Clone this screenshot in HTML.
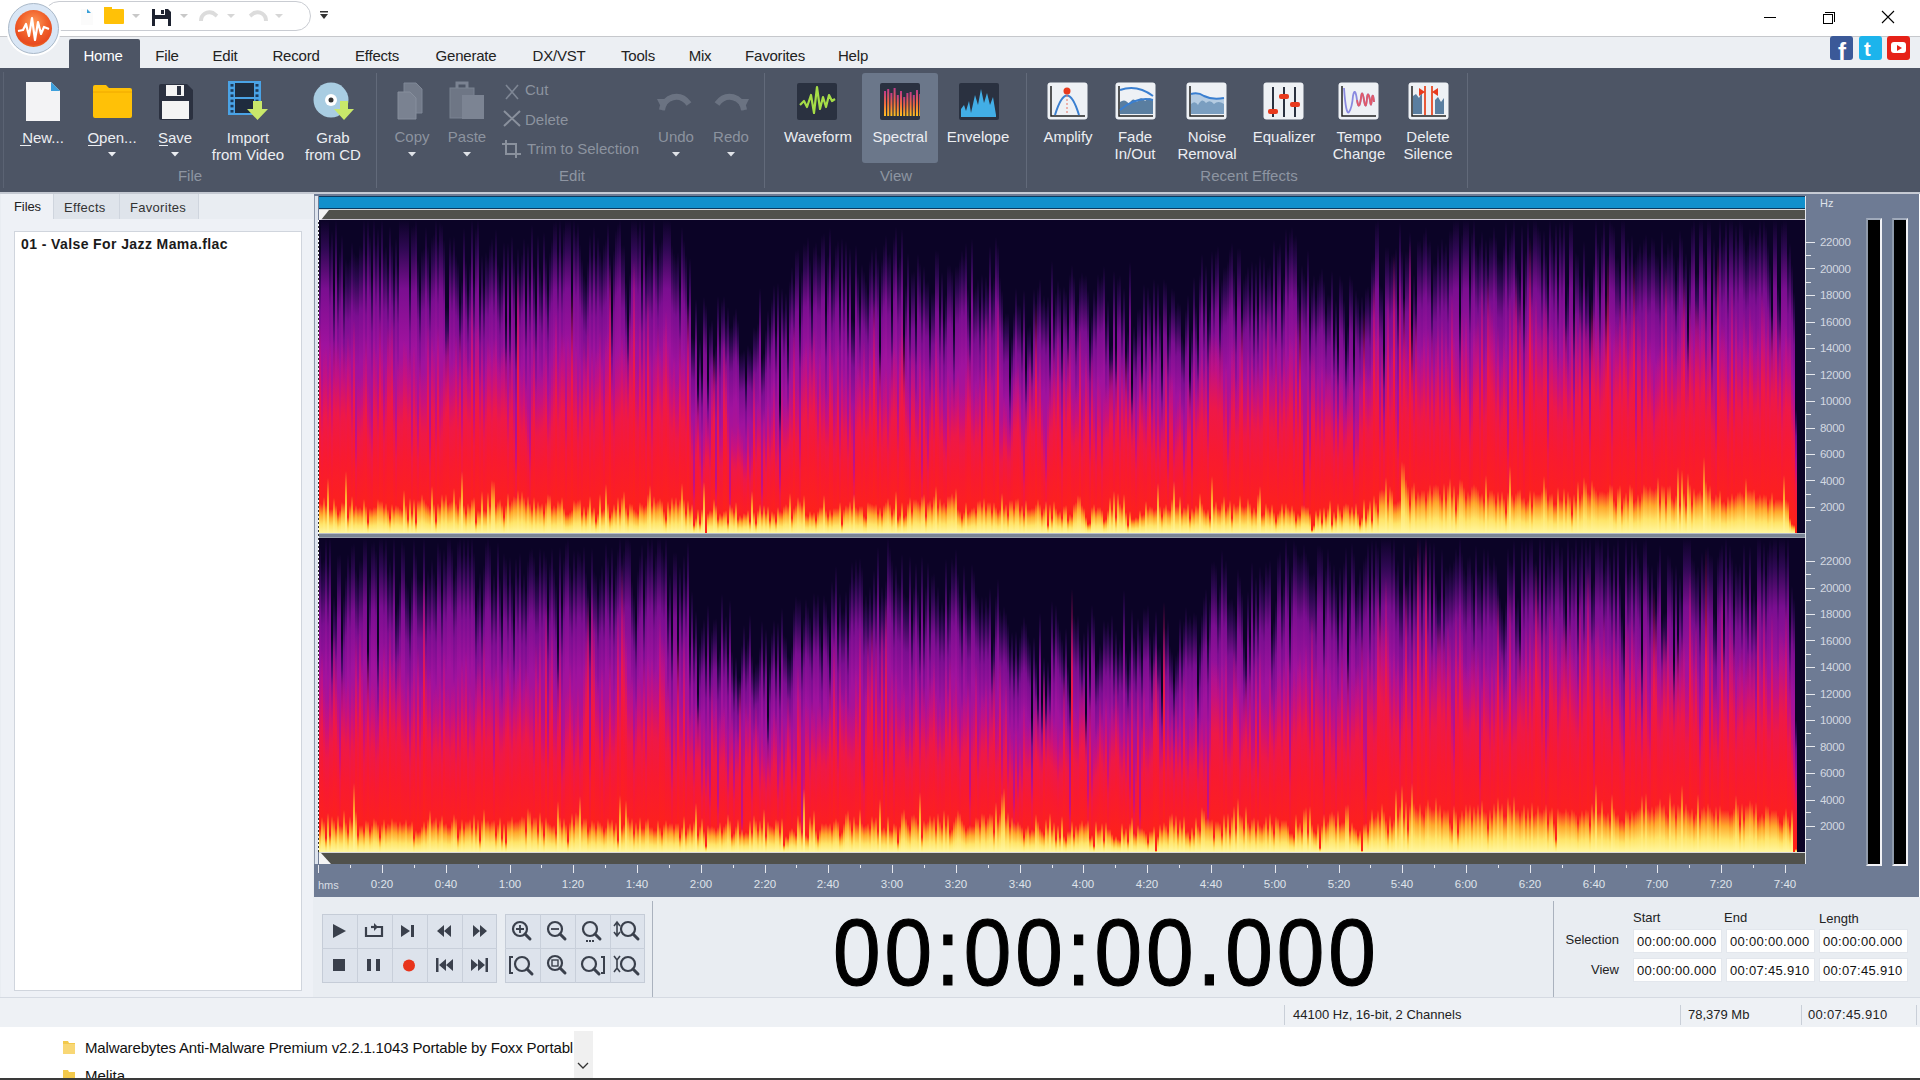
<!DOCTYPE html><html><head><meta charset="utf-8"><title>WavePad</title><style>
*{margin:0;padding:0;box-sizing:border-box}
html,body{width:1920px;height:1080px;overflow:hidden;background:#fff;font-family:"Liberation Sans",sans-serif}
.a{position:absolute;display:block}
.t{position:absolute;white-space:nowrap;font-family:"Liberation Sans",sans-serif}

.spec{position:absolute;left:319px;width:1486px;display:flex;background:#0b0326;overflow:hidden}
.spec i{display:block;width:2px;height:100%;flex:none;background-color:#0b0326;background-repeat:no-repeat;background-position:bottom;
background-image:linear-gradient(to top,#fff7a0,#ffe468 30%,#ffa82c 62%,rgba(255,60,20,0)),linear-gradient(to top,#ff2414,#f81a30 40%,#ee1848 62%,rgba(220,16,110,.55) 82%,rgba(215,20,120,0)),linear-gradient(to top,#cc127a,#b8128e 38%,#a0129e 60%,#7a0e90 78%,rgba(60,10,100,.7) 91%,rgba(11,3,38,0))}
</style></head><body><div class="a" style="left:0px;top:0px;width:1920px;height:36px;background:#fff;"></div><div class="a" style="left:0px;top:36px;width:1920px;height:1px;background:#c6c8cc;"></div><div class="a" style="left:44px;top:1px;width:267px;height:30px;border:1px solid #c9ccd2;border-radius:15px;background:#fff"></div><svg class="a" style="left:80px;top:8px;" width="14" height="18" viewBox="0 0 14 18"><path d="M1 1h8l4 4v12H1z" fill="#fbfbfb"/><path d="M7 1l4 4H7z" fill="#3aa0d8"/></svg><div class="a" style="left:104px;top:9px;width:20px;height:15px;background:#ffc107;border-radius:1px"></div><div class="a" style="left:104px;top:7px;width:8px;height:3px;background:#ffc107;"></div><svg class="a" style="left:131px;top:13px;" width="10" height="6" viewBox="0 0 10 6"><path d="M1 1h8L5 5z" fill="#c8c8c8"/></svg><svg class="a" style="left:151px;top:8px;" width="21" height="19" viewBox="0 0 21 19"><path d="M1 1h16l3 3v14H1z" fill="#1d2230"/><rect x="4" y="1" width="10" height="6" fill="#fff"/><rect x="10" y="2" width="3" height="4" fill="#1d2230"/><rect x="4" y="11" width="13" height="7" fill="#fff"/></svg><svg class="a" style="left:179px;top:13px;" width="10" height="6" viewBox="0 0 10 6"><path d="M1 1h8L5 5z" fill="#c8c8c8"/></svg><svg class="a" style="left:197px;top:9px;" width="24" height="14" viewBox="0 0 24 14"><path d="M4 12 C4 5 10 2 16 4 L20 7" fill="none" stroke="#dcdcdc" stroke-width="4"/></svg><svg class="a" style="left:226px;top:13px;" width="10" height="6" viewBox="0 0 10 6"><path d="M1 1h8L5 5z" fill="#d6d6d6"/></svg><svg class="a" style="left:246px;top:9px;" width="24" height="14" viewBox="0 0 24 14"><path d="M20 12 C20 5 14 2 8 4 L4 7" fill="none" stroke="#dcdcdc" stroke-width="4"/></svg><svg class="a" style="left:274px;top:13px;" width="10" height="6" viewBox="0 0 10 6"><path d="M1 1h8L5 5z" fill="#d6d6d6"/></svg><svg class="a" style="left:319px;top:10px;" width="10" height="12" viewBox="0 0 10 12"><rect x="1" y="1" width="8" height="1.5" fill="#333"/><path d="M1 4h8L5 9z" fill="#333"/></svg><div class="a" style="left:1764px;top:17px;width:12px;height:1px;background:#000;"></div><div class="a" style="left:1823px;top:14px;width:10px;height:10px;border:1px solid #000"></div><div class="a" style="left:1825px;top:12px;width:10px;height:10px;border-top:1px solid #000;border-right:1px solid #000"></div><svg class="a" style="left:1881px;top:10px;" width="14" height="14" viewBox="0 0 14 14"><path d="M1 1L13 13M13 1L1 13" stroke="#000" stroke-width="1.1"/></svg><div class="a" style="left:0px;top:37px;width:1920px;height:31px;background:#eceff3;"></div><div class="a" style="left:69px;top:39px;width:71px;height:29px;background:#4d5565;border-radius:2px 2px 0 0"></div><div class="t" style="top:48.3px;font-size:15px;line-height:15px;color:#fff;letter-spacing:-0.2px;left:-97px;width:400px;text-align:center;">Home</div><div class="t" style="top:48.3px;font-size:15px;line-height:15px;color:#222;letter-spacing:-0.2px;left:-33px;width:400px;text-align:center;">File</div><div class="t" style="top:48.3px;font-size:15px;line-height:15px;color:#222;letter-spacing:-0.2px;left:25px;width:400px;text-align:center;">Edit</div><div class="t" style="top:48.3px;font-size:15px;line-height:15px;color:#222;letter-spacing:-0.2px;left:96px;width:400px;text-align:center;">Record</div><div class="t" style="top:48.3px;font-size:15px;line-height:15px;color:#222;letter-spacing:-0.2px;left:177px;width:400px;text-align:center;">Effects</div><div class="t" style="top:48.3px;font-size:15px;line-height:15px;color:#222;letter-spacing:-0.2px;left:266px;width:400px;text-align:center;">Generate</div><div class="t" style="top:48.3px;font-size:15px;line-height:15px;color:#222;letter-spacing:-0.2px;left:359px;width:400px;text-align:center;">DX/VST</div><div class="t" style="top:48.3px;font-size:15px;line-height:15px;color:#222;letter-spacing:-0.2px;left:438px;width:400px;text-align:center;">Tools</div><div class="t" style="top:48.3px;font-size:15px;line-height:15px;color:#222;letter-spacing:-0.2px;left:500px;width:400px;text-align:center;">Mix</div><div class="t" style="top:48.3px;font-size:15px;line-height:15px;color:#222;letter-spacing:-0.2px;left:575px;width:400px;text-align:center;">Favorites</div><div class="t" style="top:48.3px;font-size:15px;line-height:15px;color:#222;letter-spacing:-0.2px;left:653px;width:400px;text-align:center;">Help</div><div class="a" style="left:8px;top:3px;width:51px;height:51px;border-radius:50%;background:#d9e6f5;border:1px solid #a9b8c8;box-shadow:0 0 0 2px #fff"></div><div class="a" style="left:15px;top:10px;width:37px;height:37px;border-radius:50%;background:radial-gradient(circle at 50% 35%,#ff9a5a 0%,#f0602a 45%,#e84a20 70%,#f7b32a 100%)"></div><svg class="a" style="left:15px;top:10px;" width="37" height="37" viewBox="0 0 37 37"><path d="M3 21 L8 20 L11 14 L14 26 L17 8 L20 30 L23 12 L26 24 L29 17 L34 19" fill="none" stroke="#fff" stroke-width="2.2" stroke-linejoin="round"/></svg><div class="a" style="left:1830px;top:36px;width:23px;height:24px;background:#3b5998;border-radius:3px"></div><div class="t" style="top:39.7px;font-size:24px;line-height:24px;color:#fff;font-weight:700;left:1838px;line-height:24px">f</div><div class="a" style="left:1859px;top:36px;width:23px;height:24px;background:#1cb4ec;border-radius:3px"></div><div class="t" style="top:39.1px;font-size:20px;line-height:20px;color:#fff;font-weight:700;left:1864px;">t</div><div class="a" style="left:1887px;top:36px;width:23px;height:24px;background:#e62117;border-radius:3px"></div><div class="a" style="left:1891px;top:42px;width:15px;height:11px;background:#fff;border-radius:3px"></div><svg class="a" style="left:1895px;top:44px;" width="8" height="8" viewBox="0 0 8 8"><path d="M2 1L7 4L2 7z" fill="#e62117"/></svg><div class="a" style="left:0px;top:68px;width:1920px;height:124px;background:#4d5565;"></div><div class="a" style="left:3px;top:72px;width:1px;height:116px;background:#5b6373;"></div><div class="a" style="left:376px;top:73px;width:1px;height:115px;background:#626a7a;"></div><div class="a" style="left:764px;top:73px;width:1px;height:115px;background:#626a7a;"></div><div class="a" style="left:1026px;top:73px;width:1px;height:115px;background:#626a7a;"></div><div class="a" style="left:1467px;top:73px;width:1px;height:115px;background:#626a7a;"></div><svg class="a" style="left:26px;top:82px;" width="34" height="39" viewBox="0 0 34 39"><path d="M0 0h25l9 9v30H0z" fill="#f3f3f5"/><path d="M25 0l9 9h-9z" fill="#3d9fdc"/></svg><div class="t" style="top:130.3px;font-size:15px;line-height:15px;color:#eceef2;left:-157px;width:400px;text-align:center;">New...</div><div class="a" style="left:20px;top:145px;width:11px;height:1px;background:#eceef2;"></div><svg class="a" style="left:92px;top:84px;" width="41" height="35" viewBox="0 0 41 35"><path d="M1 3 Q1 1 3 1 H14 L17 4 H38 Q40 4 40 6 V32 Q40 34 38 34 H3 Q1 34 1 32z" fill="#ffc107"/><path d="M1 8 H40" stroke="#f0a800" stroke-width="1"/></svg><div class="t" style="top:130.3px;font-size:15px;line-height:15px;color:#eceef2;left:-88px;width:400px;text-align:center;">Open...</div><div class="a" style="left:88px;top:145px;width:13px;height:1px;background:#eceef2;"></div><svg class="a" style="left:159px;top:84px;" width="34" height="36" viewBox="0 0 34 36"><path d="M0 2 Q0 0 2 0 H28 L34 6 V34 Q34 36 32 36 H2 Q0 36 0 34z" fill="#2b3140"/><rect x="7" y="1" width="18" height="11" fill="#f4f4f4"/><rect x="18" y="2" width="4" height="9" fill="#2b3140"/><rect x="3" y="17" width="27" height="18" fill="#f4f4f4"/></svg><div class="t" style="top:130.3px;font-size:15px;line-height:15px;color:#eceef2;left:-25px;width:400px;text-align:center;">Save</div><div class="a" style="left:159px;top:145px;width:9px;height:1px;background:#eceef2;"></div><svg class="a" style="left:228px;top:81px;" width="41" height="40" viewBox="0 0 41 40"><rect x="0" y="0" width="33" height="34" fill="#4aa3e6"/><rect x="7" y="2" width="19" height="14" fill="#1f2c3e"/><rect x="7" y="18" width="19" height="14" fill="#1f2c3e"/><rect x="2.5" y="3.0" width="3" height="2.6" fill="#1d3a5a"/><rect x="27.5" y="3.0" width="3" height="2.6" fill="#1d3a5a"/><rect x="2.5" y="8.2" width="3" height="2.6" fill="#1d3a5a"/><rect x="27.5" y="8.2" width="3" height="2.6" fill="#1d3a5a"/><rect x="2.5" y="13.4" width="3" height="2.6" fill="#1d3a5a"/><rect x="27.5" y="13.4" width="3" height="2.6" fill="#1d3a5a"/><rect x="2.5" y="18.6" width="3" height="2.6" fill="#1d3a5a"/><rect x="27.5" y="18.6" width="3" height="2.6" fill="#1d3a5a"/><rect x="2.5" y="23.8" width="3" height="2.6" fill="#1d3a5a"/><rect x="27.5" y="23.8" width="3" height="2.6" fill="#1d3a5a"/><rect x="2.5" y="29.0" width="3" height="2.6" fill="#1d3a5a"/><rect x="27.5" y="29.0" width="3" height="2.6" fill="#1d3a5a"/><path d="M25 20h9v8h6l-10.5 11L19 28h6z" fill="#c9e86a"/></svg><div class="t" style="top:130.3px;font-size:15px;line-height:15px;color:#eceef2;left:48px;width:400px;text-align:center;">Import</div><div class="t" style="top:147.3px;font-size:15px;line-height:15px;color:#eceef2;left:48px;width:400px;text-align:center;">from Video</div><svg class="a" style="left:313px;top:81px;" width="41" height="40" viewBox="0 0 41 40"><circle cx="18" cy="19" r="17.5" fill="#a9cde2"/><circle cx="18" cy="19" r="6" fill="#fff"/><circle cx="18" cy="19" r="2.5" fill="#333"/><path d="M27 20h8v8h6l-10 11L21 28h6z" fill="#c9e86a"/></svg><div class="t" style="top:130.3px;font-size:15px;line-height:15px;color:#eceef2;left:133px;width:400px;text-align:center;">Grab</div><div class="t" style="top:147.3px;font-size:15px;line-height:15px;color:#eceef2;left:133px;width:400px;text-align:center;">from CD</div><svg class="a" style="left:108px;top:152px;" width="8" height="5" viewBox="0 0 8 5"><path d="M0 0h8L4 4.5z" fill="#eceef2"/></svg><svg class="a" style="left:171px;top:152px;" width="8" height="5" viewBox="0 0 8 5"><path d="M0 0h8L4 4.5z" fill="#eceef2"/></svg><div class="t" style="top:168.3px;font-size:15px;line-height:15px;color:#8e95a2;left:-10px;width:400px;text-align:center;">File</div><svg class="a" style="left:396px;top:82px;" width="32" height="38" viewBox="0 0 32 38"><path d="M8 1h12l6 6v24H8z" fill="#737b8a" stroke="#7f8796"/><path d="M2 10h12l6 6v21H2z" fill="#7a8291" stroke="#868e9c"/></svg><div class="t" style="top:129.3px;font-size:15px;line-height:15px;color:#8c939f;left:212px;width:400px;text-align:center;">Copy</div><svg class="a" style="left:448px;top:81px;" width="38" height="39" viewBox="0 0 38 39"><rect x="2" y="7" width="24" height="30" fill="#6e7685" stroke="#7b8392"/><path d="M9 7V2h10v5" fill="none" stroke="#7b8392" stroke-width="3"/><rect x="14" y="14" width="22" height="24" fill="#7c8493"/></svg><div class="t" style="top:129.3px;font-size:15px;line-height:15px;color:#8c939f;left:267px;width:400px;text-align:center;">Paste</div><svg class="a" style="left:408px;top:152px;" width="8" height="5" viewBox="0 0 8 5"><path d="M0 0h8L4 4.5z" fill="#e0e3e8"/></svg><svg class="a" style="left:463px;top:152px;" width="8" height="5" viewBox="0 0 8 5"><path d="M0 0h8L4 4.5z" fill="#e0e3e8"/></svg><svg class="a" style="left:503px;top:84px;" width="18" height="16" viewBox="0 0 18 16"><path d="M3 1L15 15M15 1L3 15" stroke="#7e8694" stroke-width="1.6"/></svg><div class="t" style="top:82.3px;font-size:15px;line-height:15px;color:#8c939f;left:525px;">Cut</div><svg class="a" style="left:502px;top:109px;" width="20" height="19" viewBox="0 0 20 19"><path d="M2 2L18 17M18 2L2 17" stroke="#8a919d" stroke-width="2"/></svg><div class="t" style="top:112.3px;font-size:15px;line-height:15px;color:#8c939f;left:525px;">Delete</div><svg class="a" style="left:501px;top:139px;" width="21" height="20" viewBox="0 0 21 20"><path d="M5 1V15H20M1 5H15V19" fill="none" stroke="#8a919d" stroke-width="2"/></svg><div class="t" style="top:141.3px;font-size:15px;line-height:15px;color:#8c939f;left:527px;">Trim to Selection</div><svg class="a" style="left:656px;top:90px;" width="38" height="24" viewBox="0 0 38 24"><path d="M6 20 C8 6 24 2 33 14" fill="none" stroke="#6b7382" stroke-width="6"/><path d="M1 9 L14 9 L7 21z" fill="#6b7382"/></svg><div class="t" style="top:129.3px;font-size:15px;line-height:15px;color:#8c939f;left:476px;width:400px;text-align:center;">Undo</div><svg class="a" style="left:712px;top:90px;" width="38" height="24" viewBox="0 0 38 24"><path d="M32 20 C30 6 14 2 5 14" fill="none" stroke="#6b7382" stroke-width="6"/><path d="M37 9 L24 9 L31 21z" fill="#6b7382"/></svg><div class="t" style="top:129.3px;font-size:15px;line-height:15px;color:#8c939f;left:531px;width:400px;text-align:center;">Redo</div><svg class="a" style="left:672px;top:152px;" width="8" height="5" viewBox="0 0 8 5"><path d="M0 0h8L4 4.5z" fill="#e0e3e8"/></svg><svg class="a" style="left:727px;top:152px;" width="8" height="5" viewBox="0 0 8 5"><path d="M0 0h8L4 4.5z" fill="#e0e3e8"/></svg><div class="t" style="top:168.3px;font-size:15px;line-height:15px;color:#8e95a2;left:372px;width:400px;text-align:center;">Edit</div><div class="a" style="left:862px;top:73px;width:76px;height:90px;background:#6b778a;border-radius:3px"></div><svg class="a" style="left:797px;top:83px;" width="40" height="37" viewBox="0 0 40 37"><rect width="40" height="37" rx="2" fill="#2a3140"/><path d="M3 22 L7 18 L10 24 L14 12 L17 30 L20 4 L23 26 L26 14 L29 24 L32 12 L35 18 L38 16" fill="none" stroke="#a6dd47" stroke-width="2.2" stroke-linejoin="round"/></svg><div class="t" style="top:129.3px;font-size:15px;line-height:15px;color:#eceef2;left:618px;width:400px;text-align:center;">Waveform</div><svg class="a" style="left:880px;top:83px;" width="40" height="37" viewBox="0 0 40 37"><defs><linearGradient id="sg" x1="0" y1="0" x2="0" y2="1"><stop offset="0" stop-color="#c03a8a"/><stop offset=".5" stop-color="#f06a40"/><stop offset="1" stop-color="#ffc020"/></linearGradient></defs><rect width="40" height="37" rx="2" fill="#2a3140"/><rect x="4.0" y="8" width="2" height="25" fill="url(#sg)"/><rect x="7.2" y="6" width="2" height="27" fill="url(#sg)"/><rect x="10.4" y="10" width="2" height="23" fill="url(#sg)"/><rect x="13.6" y="5" width="2" height="28" fill="url(#sg)"/><rect x="16.8" y="12" width="2" height="21" fill="url(#sg)"/><rect x="20.0" y="8" width="2" height="25" fill="url(#sg)"/><rect x="23.2" y="14" width="2" height="19" fill="url(#sg)"/><rect x="26.4" y="10" width="2" height="23" fill="url(#sg)"/><rect x="29.6" y="9" width="2" height="24" fill="url(#sg)"/><rect x="32.8" y="12" width="2" height="21" fill="url(#sg)"/><rect x="36.0" y="7" width="2" height="26" fill="url(#sg)"/><rect x="39.2" y="11" width="2" height="22" fill="url(#sg)"/></svg><div class="t" style="top:129.3px;font-size:15px;line-height:15px;color:#eceef2;left:700px;width:400px;text-align:center;">Spectral</div><svg class="a" style="left:959px;top:83px;" width="40" height="37" viewBox="0 0 40 37"><rect width="40" height="37" rx="2" fill="#2a3140"/><path d="M2 34 L2 26 L5 22 L7 28 L10 18 L12 30 L16 12 L19 22 L22 6 L25 20 L28 10 L31 22 L34 14 L37 32 L37 34z" fill="#42aee6"/></svg><div class="t" style="top:129.3px;font-size:15px;line-height:15px;color:#eceef2;left:778px;width:400px;text-align:center;">Envelope</div><div class="t" style="top:168.3px;font-size:15px;line-height:15px;color:#8e95a2;left:696px;width:400px;text-align:center;">View</div><svg class="a" style="left:1047px;top:82px;" width="41" height="38" viewBox="0 0 41 38"><rect x="0.5" y="0.5" width="40" height="37" rx="3" fill="#eef1f5"/><path d="M4 4V34H38" fill="none" stroke="#222" stroke-width="1.5"/><path d="M8 33 Q20 -6 32 33" fill="none" stroke="#3a7fd0" stroke-width="2"/><circle cx="20" cy="9" r="3.5" fill="#e83a1e"/><path d="M20 13V32" stroke="#e87060" stroke-dasharray="2 2"/></svg><div class="t" style="top:129.3px;font-size:15px;line-height:15px;color:#eceef2;left:868px;width:400px;text-align:center;">Amplify</div><svg class="a" style="left:1115px;top:82px;" width="41" height="38" viewBox="0 0 41 38"><rect x="0.5" y="0.5" width="40" height="37" rx="3" fill="#eef1f5"/><path d="M4 4V34H38" fill="none" stroke="#222" stroke-width="1.5"/><path d="M5 32 V20 Q10 16 14 22 Q18 14 22 20 Q26 13 30 19 Q34 14 38 18 V32z" fill="#5a7ea0"/><path d="M5 8 Q22 2 38 14" fill="none" stroke="#3a7fd0" stroke-width="2"/><path d="M5 28 Q22 14 38 18" fill="none" stroke="#3a7fd0" stroke-width="2"/></svg><div class="t" style="top:129.3px;font-size:15px;line-height:15px;color:#eceef2;left:935px;width:400px;text-align:center;">Fade</div><div class="t" style="top:146.3px;font-size:15px;line-height:15px;color:#eceef2;left:935px;width:400px;text-align:center;">In/Out</div><svg class="a" style="left:1186px;top:82px;" width="41" height="38" viewBox="0 0 41 38"><rect x="0.5" y="0.5" width="40" height="37" rx="3" fill="#eef1f5"/><path d="M4 4V34H38" fill="none" stroke="#222" stroke-width="1.5"/><path d="M5 32 V22 Q9 18 12 23 Q16 15 20 21 Q24 17 28 22 Q32 18 38 22 V32z" fill="#5a7ea0"/><path d="M5 12 Q12 10 18 14 Q26 18 38 16 V32 H5z" fill="#8fb4d6" opacity=".6"/><path d="M5 12 Q12 10 18 14 Q26 18 38 16" fill="none" stroke="#3a7fd0" stroke-width="2"/></svg><div class="t" style="top:129.3px;font-size:15px;line-height:15px;color:#eceef2;left:1007px;width:400px;text-align:center;">Noise</div><div class="t" style="top:146.3px;font-size:15px;line-height:15px;color:#eceef2;left:1007px;width:400px;text-align:center;">Removal</div><svg class="a" style="left:1263px;top:82px;" width="41" height="38" viewBox="0 0 41 38"><rect x="0.5" y="0.5" width="40" height="37" rx="3" fill="#eef1f5"/><path d="M10 5V35M21 5V35M32 5V35" stroke="#2a3140" stroke-width="2"/><rect x="5" y="27" width="10" height="5" rx="2" fill="#e83a1e"/><rect x="16" y="12" width="10" height="5" rx="2" fill="#e83a1e"/><rect x="27" y="20" width="10" height="5" rx="2" fill="#e83a1e"/></svg><div class="t" style="top:129.3px;font-size:15px;line-height:15px;color:#eceef2;left:1084px;width:400px;text-align:center;">Equalizer</div><svg class="a" style="left:1338px;top:82px;" width="41" height="38" viewBox="0 0 41 38"><rect x="0.5" y="0.5" width="40" height="37" rx="3" fill="#eef1f5"/><path d="M4 4V34H38" fill="none" stroke="#222" stroke-width="1.5"/><path d="M6 6 Q8 34 11 30 Q14 26 15 14 Q17 4 19 18 Q21 30 23 16 Q24 6 26 18 Q28 30 29 16 Q30 8 32 18 Q33 28 34 16 Q35 10 36 20" fill="none" stroke="#8a8ae0" stroke-width="1.8"/><path d="M19 18 Q21 30 23 16 Q24 6 26 18 Q28 30 29 16 Q30 8 32 18 Q33 28 34 16 Q35 10 36 20" fill="none" stroke="#e05a6a" stroke-width="1.8"/></svg><div class="t" style="top:129.3px;font-size:15px;line-height:15px;color:#eceef2;left:1159px;width:400px;text-align:center;">Tempo</div><div class="t" style="top:146.3px;font-size:15px;line-height:15px;color:#eceef2;left:1159px;width:400px;text-align:center;">Change</div><svg class="a" style="left:1408px;top:82px;" width="41" height="38" viewBox="0 0 41 38"><rect x="0.5" y="0.5" width="40" height="37" rx="3" fill="#eef1f5"/><path d="M4 4V34H38" fill="none" stroke="#222" stroke-width="1.5"/><path d="M5 32V14 L8 12 L11 16 L14 10 V32z" fill="#5a7ea0"/><path d="M27 32V18 L30 15 L33 20 L36 16 V32z" fill="#5a7ea0"/><path d="M17 4V33M24 4V33" stroke="#e85a3a" stroke-width="2"/><path d="M11 6L17 10L11 14z" fill="#e83a1e"/><path d="M30 6L24 10L30 14z" fill="#e83a1e"/></svg><div class="t" style="top:129.3px;font-size:15px;line-height:15px;color:#eceef2;left:1228px;width:400px;text-align:center;">Delete</div><div class="t" style="top:146.3px;font-size:15px;line-height:15px;color:#eceef2;left:1228px;width:400px;text-align:center;">Silence</div><div class="t" style="top:168.3px;font-size:15px;line-height:15px;color:#8e95a2;left:1049px;width:400px;text-align:center;">Recent Effects</div><div class="a" style="left:0px;top:192px;width:1920px;height:2px;background:#c4c9d2;"></div><div class="a" style="left:0px;top:194px;width:314px;height:803px;background:#e9edf2;"></div><div class="a" style="left:1px;top:194px;width:52px;height:26px;background:#eef1f6;"></div><div class="a" style="left:53px;top:194px;width:67px;height:25px;background:#dfe4eb;border-right:1px solid #cfd5de;border-left:1px solid #cfd5de"></div><div class="a" style="left:120px;top:194px;width:79px;height:25px;background:#dfe4eb;border-right:1px solid #cfd5de"></div><div class="t" style="top:200.0px;font-size:13px;line-height:13px;color:#222;letter-spacing:-0.1px;left:14px;">Files</div><div class="t" style="top:201.0px;font-size:13px;line-height:13px;color:#333;letter-spacing:0.3px;left:64px;">Effects</div><div class="t" style="top:201.0px;font-size:13px;line-height:13px;color:#333;letter-spacing:0.3px;left:130px;">Favorites</div><div class="a" style="left:1px;top:219px;width:312px;height:778px;background:#eef1f6;"></div><div class="a" style="left:14px;top:231px;width:288px;height:760px;background:#fff;border:1px solid #d0d5dd"></div><div class="t" style="top:237.1px;font-size:14px;line-height:14px;color:#1a1a1a;font-weight:700;letter-spacing:0.4px;left:21px;">01 - Valse For Jazz Mama.flac</div><div class="a" style="left:314px;top:193px;width:1605px;height:704px;background:#6e7b94;border-top:1px solid #c8ccd6"></div><div class="a" style="left:319px;top:196px;width:1486px;height:13px;background:#1290cc;border-top:1px solid #0a3a60;border-bottom:1px solid #0a3a60"></div><div class="a" style="left:319px;top:209px;width:1486px;height:11px;background:#50514c;border-top:1px solid #d8d8d8;border-bottom:1px solid #c8c4d0"></div><svg class="a" style="left:319px;top:210px;" width="20" height="10" viewBox="0 0 20 10"><path d="M0 0H10L2 10H0z" fill="#f4f4f4"/></svg><div class="spec c1" style="top:220px;height:313px"><i style="background-size:100% 30px,100% 211px,100% 284px"></i><i style="background-size:100% 29px,100% 157px,100% 313px"></i><i style="background-size:100% 36px,100% 185px,100% 313px"></i><i style="background-size:100% 28px,100% 188px,100% 313px"></i><i style="background-size:100% 55px,100% 168px,100% 313px"></i><i style="background-size:100% 24px,100% 193px,100% 290px"></i><i style="background-size:100% 24px,100% 154px,100% 302px"></i><i style="background-size:100% 35px,100% 195px,100% 243px"></i><i style="background-size:100% 28px,100% 187px,100% 313px"></i><i style="background-size:100% 19px,100% 193px,100% 260px"></i><i style="background-size:100% 23px,100% 176px,100% 282px"></i><i style="background-size:100% 31px,100% 191px,100% 298px"></i><i style="background-size:100% 30px,100% 190px,100% 247px"></i><i style="background-size:100% 62px,100% 181px,100% 274px"></i><i style="background-size:100% 16px,100% 200px,100% 271px"></i><i style="background-size:100% 28px,100% 189px,100% 274px"></i><i style="background-size:100% 37px,100% 154px,100% 291px"></i><i style="background-size:100% 24px,100% 214px,100% 281px"></i><i style="background-size:100% 28px,100% 104px,100% 278px"></i><i style="background-size:100% 25px,100% 155px,100% 277px"></i><i style="background-size:100% 26px,100% 154px,100% 288px"></i><i style="background-size:100% 24px,100% 159px,100% 286px"></i><i style="background-size:100% 34px,100% 181px,100% 313px"></i><i style="background-size:100% 27px,100% 197px,100% 279px"></i><i style="background-size:100% 11px,100% 151px,100% 313px"></i><i style="background-size:100% 25px,100% 139px,100% 298px"></i><i style="background-size:100% 24px,100% 122px,100% 257px"></i><i style="background-size:100% 26px,100% 194px,100% 313px"></i><i style="background-size:100% 26px,100% 183px,100% 289px"></i><i style="background-size:100% 34px,100% 155px,100% 305px"></i><i style="background-size:100% 32px,100% 215px,100% 268px"></i><i style="background-size:100% 32px,100% 189px,100% 313px"></i><i style="background-size:100% 26px,100% 144px,100% 282px"></i><i style="background-size:100% 30px,100% 171px,100% 287px"></i><i style="background-size:100% 24px,100% 208px,100% 269px"></i><i style="background-size:100% 15px,100% 204px,100% 307px"></i><i style="background-size:100% 29px,100% 215px,100% 289px"></i><i style="background-size:100% 24px,100% 158px,100% 260px"></i><i style="background-size:100% 28px,100% 120px,100% 295px"></i><i style="background-size:100% 27px,100% 174px,100% 268px"></i><i style="background-size:100% 25px,100% 175px,100% 313px"></i><i style="background-size:100% 23px,100% 174px,100% 313px"></i><i style="background-size:100% 43px,100% 193px,100% 313px"></i><i style="background-size:100% 28px,100% 190px,100% 313px"></i><i style="background-size:100% 14px,100% 176px,100% 313px"></i><i style="background-size:100% 35px,100% 185px,100% 256px"></i><i style="background-size:100% 20px,100% 120px,100% 307px"></i><i style="background-size:100% 34px,100% 187px,100% 308px"></i><i style="background-size:100% 11px,100% 161px,100% 313px"></i><i style="background-size:100% 33px,100% 120px,100% 273px"></i><i style="background-size:100% 33px,100% 176px,100% 243px"></i><i style="background-size:100% 39px,100% 160px,100% 283px"></i><i style="background-size:100% 34px,100% 161px,100% 285px"></i><i style="background-size:100% 30px,100% 159px,100% 306px"></i><i style="background-size:100% 28px,100% 209px,100% 287px"></i><i style="background-size:100% 25px,100% 108px,100% 257px"></i><i style="background-size:100% 47px,100% 197px,100% 296px"></i><i style="background-size:100% 29px,100% 184px,100% 299px"></i><i style="background-size:100% 12px,100% 135px,100% 313px"></i><i style="background-size:100% 30px,100% 207px,100% 293px"></i><i style="background-size:100% 27px,100% 148px,100% 311px"></i><i style="background-size:100% 39px,100% 157px,100% 309px"></i><i style="background-size:100% 33px,100% 180px,100% 293px"></i><i style="background-size:100% 39px,100% 193px,100% 226px"></i><i style="background-size:100% 29px,100% 203px,100% 226px"></i><i style="background-size:100% 31px,100% 168px,100% 296px"></i><i style="background-size:100% 32px,100% 170px,100% 283px"></i><i style="background-size:100% 45px,100% 175px,100% 297px"></i><i style="background-size:100% 30px,100% 198px,100% 278px"></i><i style="background-size:100% 25px,100% 165px,100% 271px"></i><i style="background-size:100% 37px,100% 204px,100% 230px"></i><i style="background-size:100% 62px,100% 135px,100% 253px"></i><i style="background-size:100% 28px,100% 189px,100% 305px"></i><i style="background-size:100% 20px,100% 193px,100% 272px"></i><i style="background-size:100% 30px,100% 175px,100% 243px"></i><i style="background-size:100% 27px,100% 173px,100% 270px"></i><i style="background-size:100% 34px,100% 236px,100% 313px"></i><i style="background-size:100% 36px,100% 141px,100% 255px"></i><i style="background-size:100% 11px,100% 208px,100% 305px"></i><i style="background-size:100% 23px,100% 211px,100% 313px"></i><i style="background-size:100% 22px,100% 164px,100% 241px"></i><i style="background-size:100% 42px,100% 193px,100% 278px"></i><i style="background-size:100% 23px,100% 148px,100% 248px"></i><i style="background-size:100% 22px,100% 174px,100% 281px"></i><i style="background-size:100% 41px,100% 196px,100% 276px"></i><i style="background-size:100% 27px,100% 190px,100% 289px"></i><i style="background-size:100% 53px,100% 178px,100% 295px"></i><i style="background-size:100% 52px,100% 194px,100% 278px"></i><i style="background-size:100% 27px,100% 197px,100% 304px"></i><i style="background-size:100% 32px,100% 177px,100% 269px"></i><i style="background-size:100% 34px,100% 178px,100% 253px"></i><i style="background-size:100% 28px,100% 187px,100% 267px"></i><i style="background-size:100% 16px,100% 188px,100% 291px"></i><i style="background-size:100% 28px,100% 186px,100% 212px"></i><i style="background-size:100% 40px,100% 142px,100% 290px"></i><i style="background-size:100% 29px,100% 183px,100% 215px"></i><i style="background-size:100% 33px,100% 188px,100% 297px"></i><i style="background-size:100% 37px,100% 149px,100% 274px"></i><i style="background-size:100% 36px,100% 91px,100% 209px"></i><i style="background-size:100% 43px,100% 261px,100% 285px"></i><i style="background-size:100% 35px,100% 166px,100% 264px"></i><i style="background-size:100% 42px,100% 159px,100% 279px"></i><i style="background-size:100% 36px,100% 169px,100% 295px"></i><i style="background-size:100% 29px,100% 151px,100% 234px"></i><i style="background-size:100% 37px,100% 125px,100% 290px"></i><i style="background-size:100% 30px,100% 96px,100% 255px"></i><i style="background-size:100% 24px,100% 171px,100% 308px"></i><i style="background-size:100% 36px,100% 199px,100% 267px"></i><i style="background-size:100% 26px,100% 156px,100% 231px"></i><i style="background-size:100% 32px,100% 156px,100% 298px"></i><i style="background-size:100% 28px,100% 160px,100% 265px"></i><i style="background-size:100% 30px,100% 163px,100% 253px"></i><i style="background-size:100% 20px,100% 172px,100% 301px"></i><i style="background-size:100% 31px,100% 186px,100% 276px"></i><i style="background-size:100% 39px,100% 140px,100% 244px"></i><i style="background-size:100% 38px,100% 149px,100% 281px"></i><i style="background-size:100% 25px,100% 170px,100% 294px"></i><i style="background-size:100% 28px,100% 188px,100% 311px"></i><i style="background-size:100% 26px,100% 221px,100% 312px"></i><i style="background-size:100% 33px,100% 170px,100% 282px"></i><i style="background-size:100% 31px,100% 187px,100% 313px"></i><i style="background-size:100% 36px,100% 202px,100% 281px"></i><i style="background-size:100% 25px,100% 196px,100% 306px"></i><i style="background-size:100% 19px,100% 135px,100% 313px"></i><i style="background-size:100% 19px,100% 198px,100% 313px"></i><i style="background-size:100% 21px,100% 187px,100% 313px"></i><i style="background-size:100% 23px,100% 244px,100% 227px"></i><i style="background-size:100% 33px,100% 176px,100% 313px"></i><i style="background-size:100% 31px,100% 188px,100% 301px"></i><i style="background-size:100% 33px,100% 144px,100% 310px"></i><i style="background-size:100% 34px,100% 178px,100% 289px"></i><i style="background-size:100% 19px,100% 149px,100% 274px"></i><i style="background-size:100% 27px,100% 193px,100% 258px"></i><i style="background-size:100% 19px,100% 180px,100% 252px"></i><i style="background-size:100% 27px,100% 206px,100% 272px"></i><i style="background-size:100% 37px,100% 155px,100% 298px"></i><i style="background-size:100% 22px,100% 186px,100% 278px"></i><i style="background-size:100% 26px,100% 160px,100% 306px"></i><i style="background-size:100% 12px,100% 183px,100% 276px"></i><i style="background-size:100% 20px,100% 185px,100% 296px"></i><i style="background-size:100% 39px,100% 203px,100% 283px"></i><i style="background-size:100% 22px,100% 176px,100% 275px"></i><i style="background-size:100% 24px,100% 140px,100% 289px"></i><i style="background-size:100% 49px,100% 198px,100% 294px"></i><i style="background-size:100% 30px,100% 201px,100% 310px"></i><i style="background-size:100% 16px,100% 269px,100% 278px"></i><i style="background-size:100% 22px,100% 171px,100% 224px"></i><i style="background-size:100% 29px,100% 150px,100% 283px"></i><i style="background-size:100% 24px,100% 179px,100% 303px"></i><i style="background-size:100% 36px,100% 182px,100% 309px"></i><i style="background-size:100% 22px,100% 187px,100% 313px"></i><i style="background-size:100% 36px,100% 201px,100% 288px"></i><i style="background-size:100% 42px,100% 185px,100% 288px"></i><i style="background-size:100% 26px,100% 198px,100% 251px"></i><i style="background-size:100% 19px,100% 181px,100% 214px"></i><i style="background-size:100% 30px,100% 221px,100% 260px"></i><i style="background-size:100% 29px,100% 209px,100% 313px"></i><i style="background-size:100% 24px,100% 272px,100% 313px"></i><i style="background-size:100% 22px,100% 172px,100% 313px"></i><i style="background-size:100% 20px,100% 162px,100% 304px"></i><i style="background-size:100% 31px,100% 216px,100% 313px"></i><i style="background-size:100% 29px,100% 177px,100% 256px"></i><i style="background-size:100% 26px,100% 211px,100% 313px"></i><i style="background-size:100% 28px,100% 139px,100% 269px"></i><i style="background-size:100% 39px,100% 240px,100% 280px"></i><i style="background-size:100% 48px,100% 181px,100% 282px"></i><i style="background-size:100% 28px,100% 132px,100% 273px"></i><i style="background-size:100% 37px,100% 179px,100% 313px"></i><i style="background-size:100% 31px,100% 188px,100% 292px"></i><i style="background-size:100% 33px,100% 209px,100% 274px"></i><i style="background-size:100% 35px,100% 187px,100% 290px"></i><i style="background-size:100% 32px,100% 175px,100% 295px"></i><i style="background-size:100% 22px,100% 207px,100% 313px"></i><i style="background-size:100% 14px,100% 222px,100% 313px"></i><i style="background-size:100% 32px,100% 192px,100% 313px"></i><i style="background-size:100% 25px,100% 167px,100% 312px"></i><i style="background-size:100% 36px,100% 161px,100% 288px"></i><i style="background-size:100% 30px,100% 177px,100% 280px"></i><i style="background-size:100% 36px,100% 153px,100% 276px"></i><i style="background-size:100% 29px,100% 150px,100% 281px"></i><i style="background-size:100% 34px,100% 200px,100% 247px"></i><i style="background-size:100% 50px,100% 177px,100% 306px"></i><i style="background-size:100% 34px,100% 183px,100% 293px"></i><i style="background-size:100% 20px,100% 160px,100% 278px"></i><i style="background-size:100% 33px,100% 229px,100% 233px"></i><i style="background-size:100% 24px,100% 144px,100% 275px"></i><i style="background-size:100% 29px,100% 114px,100% 197px"></i><i style="background-size:100% 8px,100% 51px,100% 195px"></i><i style="background-size:100% 15px,100% 122px,100% 234px"></i><i style="background-size:100% 24px,100% 139px,100% 149px"></i><i style="background-size:100% 10px,100% 104px,100% 194px"></i><i style="background-size:100% 24px,100% 71px,100% 161px"></i><i style="background-size:100% 51px,100% 102px,100% 236px"></i><i style="background-size:100% 0px,100% 119px,100% 228px"></i><i style="background-size:100% 20px,100% 119px,100% 154px"></i><i style="background-size:100% 23px,100% 100px,100% 208px"></i><i style="background-size:100% 22px,100% 163px,100% 213px"></i><i style="background-size:100% 34px,100% 181px,100% 178px"></i><i style="background-size:100% 28px,100% 55px,100% 188px"></i><i style="background-size:100% 14px,100% 168px,100% 237px"></i><i style="background-size:100% 20px,100% 107px,100% 198px"></i><i style="background-size:100% 18px,100% 108px,100% 233px"></i><i style="background-size:100% 22px,100% 194px,100% 237px"></i><i style="background-size:100% 23px,100% 177px,100% 214px"></i><i style="background-size:100% 11px,100% 125px,100% 226px"></i><i style="background-size:100% 29px,100% 43px,100% 206px"></i><i style="background-size:100% 26px,100% 107px,100% 207px"></i><i style="background-size:100% 21px,100% 102px,100% 219px"></i><i style="background-size:100% 31px,100% 100px,100% 225px"></i><i style="background-size:100% 14px,100% 111px,100% 213px"></i><i style="background-size:100% 18px,100% 106px,100% 180px"></i><i style="background-size:100% 16px,100% 100px,100% 181px"></i><i style="background-size:100% 20px,100% 85px,100% 183px"></i><i style="background-size:100% 19px,100% 84px,100% 155px"></i><i style="background-size:100% 23px,100% 112px,100% 188px"></i><i style="background-size:100% 12px,100% 80px,100% 185px"></i><i style="background-size:100% 42px,100% 92px,100% 180px"></i><i style="background-size:100% 21px,100% 164px,100% 206px"></i><i style="background-size:100% 10px,100% 111px,100% 204px"></i><i style="background-size:100% 23px,100% 132px,100% 210px"></i><i style="background-size:100% 29px,100% 127px,100% 245px"></i><i style="background-size:100% 20px,100% 50px,100% 175px"></i><i style="background-size:100% 28px,100% 123px,100% 180px"></i><i style="background-size:100% 20px,100% 96px,100% 204px"></i><i style="background-size:100% 27px,100% 132px,100% 223px"></i><i style="background-size:100% 13px,100% 113px,100% 209px"></i><i style="background-size:100% 22px,100% 127px,100% 234px"></i><i style="background-size:100% 20px,100% 151px,100% 248px"></i><i style="background-size:100% 12px,100% 103px,100% 203px"></i><i style="background-size:100% 26px,100% 115px,100% 250px"></i><i style="background-size:100% 22px,100% 61px,100% 130px"></i><i style="background-size:100% 21px,100% 149px,100% 245px"></i><i style="background-size:100% 27px,100% 129px,100% 224px"></i><i style="background-size:100% 29px,100% 129px,100% 240px"></i><i style="background-size:100% 27px,100% 136px,100% 188px"></i><i style="background-size:100% 40px,100% 154px,100% 252px"></i><i style="background-size:100% 15px,100% 145px,100% 266px"></i><i style="background-size:100% 25px,100% 208px,100% 250px"></i><i style="background-size:100% 28px,100% 144px,100% 283px"></i><i style="background-size:100% 36px,100% 153px,100% 284px"></i><i style="background-size:100% 32px,100% 102px,100% 211px"></i><i style="background-size:100% 28px,100% 180px,100% 263px"></i><i style="background-size:100% 38px,100% 185px,100% 290px"></i><i style="background-size:100% 18px,100% 194px,100% 289px"></i><i style="background-size:100% 17px,100% 163px,100% 296px"></i><i style="background-size:100% 22px,100% 195px,100% 274px"></i><i style="background-size:100% 19px,100% 189px,100% 232px"></i><i style="background-size:100% 21px,100% 205px,100% 287px"></i><i style="background-size:100% 13px,100% 172px,100% 291px"></i><i style="background-size:100% 22px,100% 138px,100% 279px"></i><i style="background-size:100% 26px,100% 185px,100% 278px"></i><i style="background-size:100% 26px,100% 149px,100% 298px"></i><i style="background-size:100% 38px,100% 161px,100% 300px"></i><i style="background-size:100% 23px,100% 141px,100% 223px"></i><i style="background-size:100% 17px,100% 137px,100% 278px"></i><i style="background-size:100% 24px,100% 196px,100% 305px"></i><i style="background-size:100% 19px,100% 183px,100% 256px"></i><i style="background-size:100% 25px,100% 133px,100% 268px"></i><i style="background-size:100% 25px,100% 146px,100% 288px"></i><i style="background-size:100% 25px,100% 188px,100% 293px"></i><i style="background-size:100% 31px,100% 118px,100% 239px"></i><i style="background-size:100% 9px,100% 166px,100% 295px"></i><i style="background-size:100% 24px,100% 149px,100% 256px"></i><i style="background-size:100% 28px,100% 155px,100% 292px"></i><i style="background-size:100% 27px,100% 120px,100% 224px"></i><i style="background-size:100% 32px,100% 162px,100% 285px"></i><i style="background-size:100% 25px,100% 132px,100% 215px"></i><i style="background-size:100% 39px,100% 72px,100% 212px"></i><i style="background-size:100% 26px,100% 159px,100% 288px"></i><i style="background-size:100% 24px,100% 171px,100% 261px"></i><i style="background-size:100% 27px,100% 179px,100% 230px"></i><i style="background-size:100% 27px,100% 152px,100% 269px"></i><i style="background-size:100% 17px,100% 192px,100% 262px"></i><i style="background-size:100% 15px,100% 148px,100% 252px"></i><i style="background-size:100% 31px,100% 153px,100% 241px"></i><i style="background-size:100% 30px,100% 187px,100% 273px"></i><i style="background-size:100% 29px,100% 169px,100% 284px"></i><i style="background-size:100% 28px,100% 234px,100% 259px"></i><i style="background-size:100% 29px,100% 179px,100% 287px"></i><i style="background-size:100% 20px,100% 131px,100% 274px"></i><i style="background-size:100% 26px,100% 181px,100% 187px"></i><i style="background-size:100% 18px,100% 138px,100% 274px"></i><i style="background-size:100% 28px,100% 158px,100% 289px"></i><i style="background-size:100% 31px,100% 164px,100% 298px"></i><i style="background-size:100% 35px,100% 128px,100% 279px"></i><i style="background-size:100% 29px,100% 160px,100% 282px"></i><i style="background-size:100% 19px,100% 182px,100% 222px"></i><i style="background-size:100% 25px,100% 192px,100% 296px"></i><i style="background-size:100% 42px,100% 183px,100% 306px"></i><i style="background-size:100% 14px,100% 129px,100% 267px"></i><i style="background-size:100% 18px,100% 199px,100% 276px"></i><i style="background-size:100% 31px,100% 223px,100% 304px"></i><i style="background-size:100% 16px,100% 199px,100% 179px"></i><i style="background-size:100% 18px,100% 160px,100% 248px"></i><i style="background-size:100% 30px,100% 148px,100% 280px"></i><i style="background-size:100% 36px,100% 120px,100% 220px"></i><i style="background-size:100% 22px,100% 185px,100% 261px"></i><i style="background-size:100% 34px,100% 181px,100% 262px"></i><i style="background-size:100% 34px,100% 145px,100% 214px"></i><i style="background-size:100% 32px,100% 132px,100% 279px"></i><i style="background-size:100% 29px,100% 185px,100% 270px"></i><i style="background-size:100% 37px,100% 77px,100% 242px"></i><i style="background-size:100% 39px,100% 174px,100% 267px"></i><i style="background-size:100% 17px,100% 132px,100% 251px"></i><i style="background-size:100% 31px,100% 96px,100% 252px"></i><i style="background-size:100% 33px,100% 147px,100% 206px"></i><i style="background-size:100% 27px,100% 176px,100% 241px"></i><i style="background-size:100% 37px,100% 145px,100% 241px"></i><i style="background-size:100% 47px,100% 200px,100% 283px"></i><i style="background-size:100% 26px,100% 176px,100% 282px"></i><i style="background-size:100% 35px,100% 146px,100% 225px"></i><i style="background-size:100% 29px,100% 153px,100% 261px"></i><i style="background-size:100% 31px,100% 125px,100% 214px"></i><i style="background-size:100% 27px,100% 116px,100% 238px"></i><i style="background-size:100% 37px,100% 163px,100% 268px"></i><i style="background-size:100% 37px,100% 142px,100% 268px"></i><i style="background-size:100% 40px,100% 156px,100% 262px"></i><i style="background-size:100% 36px,100% 154px,100% 202px"></i><i style="background-size:100% 45px,100% 156px,100% 267px"></i><i style="background-size:100% 24px,100% 163px,100% 267px"></i><i style="background-size:100% 22px,100% 141px,100% 274px"></i><i style="background-size:100% 15px,100% 141px,100% 283px"></i><i style="background-size:100% 21px,100% 140px,100% 277px"></i><i style="background-size:100% 31px,100% 166px,100% 290px"></i><i style="background-size:100% 20px,100% 188px,100% 245px"></i><i style="background-size:100% 22px,100% 179px,100% 217px"></i><i style="background-size:100% 25px,100% 145px,100% 294px"></i><i style="background-size:100% 26px,100% 137px,100% 242px"></i><i style="background-size:100% 21px,100% 153px,100% 247px"></i><i style="background-size:100% 32px,100% 145px,100% 254px"></i><i style="background-size:100% 33px,100% 166px,100% 227px"></i><i style="background-size:100% 27px,100% 111px,100% 259px"></i><i style="background-size:100% 35px,100% 152px,100% 237px"></i><i style="background-size:100% 24px,100% 220px,100% 257px"></i><i style="background-size:100% 31px,100% 163px,100% 248px"></i><i style="background-size:100% 31px,100% 171px,100% 287px"></i><i style="background-size:100% 21px,100% 160px,100% 248px"></i><i style="background-size:100% 31px,100% 126px,100% 256px"></i><i style="background-size:100% 26px,100% 176px,100% 296px"></i><i style="background-size:100% 21px,100% 237px,100% 288px"></i><i style="background-size:100% 24px,100% 113px,100% 256px"></i><i style="background-size:100% 40px,100% 114px,100% 243px"></i><i style="background-size:100% 25px,100% 137px,100% 216px"></i><i style="background-size:100% 29px,100% 130px,100% 220px"></i><i style="background-size:100% 18px,100% 114px,100% 220px"></i><i style="background-size:100% 33px,100% 116px,100% 156px"></i><i style="background-size:100% 33px,100% 135px,100% 197px"></i><i style="background-size:100% 25px,100% 162px,100% 221px"></i><i style="background-size:100% 34px,100% 164px,100% 245px"></i><i style="background-size:100% 35px,100% 173px,100% 229px"></i><i style="background-size:100% 23px,100% 151px,100% 228px"></i><i style="background-size:100% 28px,100% 115px,100% 204px"></i><i style="background-size:100% 18px,100% 74px,100% 243px"></i><i style="background-size:100% 33px,100% 132px,100% 166px"></i><i style="background-size:100% 24px,100% 152px,100% 206px"></i><i style="background-size:100% 24px,100% 182px,100% 208px"></i><i style="background-size:100% 25px,100% 161px,100% 187px"></i><i style="background-size:100% 25px,100% 157px,100% 244px"></i><i style="background-size:100% 29px,100% 231px,100% 211px"></i><i style="background-size:100% 34px,100% 160px,100% 246px"></i><i style="background-size:100% 29px,100% 181px,100% 254px"></i><i style="background-size:100% 19px,100% 133px,100% 233px"></i><i style="background-size:100% 25px,100% 109px,100% 238px"></i><i style="background-size:100% 32px,100% 80px,100% 227px"></i><i style="background-size:100% 8px,100% 132px,100% 237px"></i><i style="background-size:100% 29px,100% 159px,100% 193px"></i><i style="background-size:100% 15px,100% 161px,100% 272px"></i><i style="background-size:100% 32px,100% 186px,100% 218px"></i><i style="background-size:100% 25px,100% 165px,100% 241px"></i><i style="background-size:100% 20px,100% 203px,100% 253px"></i><i style="background-size:100% 22px,100% 159px,100% 246px"></i><i style="background-size:100% 15px,100% 100px,100% 192px"></i><i style="background-size:100% 27px,100% 185px,100% 247px"></i><i style="background-size:100% 28px,100% 159px,100% 242px"></i><i style="background-size:100% 13px,100% 186px,100% 211px"></i><i style="background-size:100% 19px,100% 195px,100% 259px"></i><i style="background-size:100% 17px,100% 141px,100% 268px"></i><i style="background-size:100% 29px,100% 136px,100% 257px"></i><i style="background-size:100% 31px,100% 149px,100% 213px"></i><i style="background-size:100% 38px,100% 145px,100% 232px"></i><i style="background-size:100% 37px,100% 209px,100% 256px"></i><i style="background-size:100% 28px,100% 122px,100% 261px"></i><i style="background-size:100% 25px,100% 144px,100% 257px"></i><i style="background-size:100% 16px,100% 181px,100% 258px"></i><i style="background-size:100% 9px,100% 162px,100% 243px"></i><i style="background-size:100% 10px,100% 109px,100% 193px"></i><i style="background-size:100% 26px,100% 179px,100% 218px"></i><i style="background-size:100% 29px,100% 138px,100% 244px"></i><i style="background-size:100% 23px,100% 109px,100% 234px"></i><i style="background-size:100% 26px,100% 159px,100% 259px"></i><i style="background-size:100% 26px,100% 150px,100% 254px"></i><i style="background-size:100% 23px,100% 99px,100% 257px"></i><i style="background-size:100% 12px,100% 138px,100% 267px"></i><i style="background-size:100% 14px,100% 149px,100% 213px"></i><i style="background-size:100% 23px,100% 146px,100% 233px"></i><i style="background-size:100% 36px,100% 174px,100% 184px"></i><i style="background-size:100% 24px,100% 174px,100% 188px"></i><i style="background-size:100% 42px,100% 126px,100% 262px"></i><i style="background-size:100% 16px,100% 162px,100% 185px"></i><i style="background-size:100% 40px,100% 188px,100% 255px"></i><i style="background-size:100% 30px,100% 130px,100% 258px"></i><i style="background-size:100% 26px,100% 176px,100% 224px"></i><i style="background-size:100% 39px,100% 150px,100% 245px"></i><i style="background-size:100% 21px,100% 182px,100% 176px"></i><i style="background-size:100% 8px,100% 143px,100% 202px"></i><i style="background-size:100% 22px,100% 171px,100% 271px"></i><i style="background-size:100% 14px,100% 134px,100% 150px"></i><i style="background-size:100% 14px,100% 146px,100% 207px"></i><i style="background-size:100% 16px,100% 102px,100% 197px"></i><i style="background-size:100% 15px,100% 137px,100% 224px"></i><i style="background-size:100% 23px,100% 173px,100% 225px"></i><i style="background-size:100% 18px,100% 161px,100% 172px"></i><i style="background-size:100% 19px,100% 142px,100% 249px"></i><i style="background-size:100% 32px,100% 133px,100% 204px"></i><i style="background-size:100% 24px,100% 162px,100% 246px"></i><i style="background-size:100% 27px,100% 186px,100% 235px"></i><i style="background-size:100% 26px,100% 126px,100% 189px"></i><i style="background-size:100% 23px,100% 149px,100% 254px"></i><i style="background-size:100% 24px,100% 112px,100% 215px"></i><i style="background-size:100% 50px,100% 145px,100% 250px"></i><i style="background-size:100% 27px,100% 112px,100% 219px"></i><i style="background-size:100% 17px,100% 132px,100% 167px"></i><i style="background-size:100% 26px,100% 128px,100% 254px"></i><i style="background-size:100% 29px,100% 185px,100% 251px"></i><i style="background-size:100% 24px,100% 87px,100% 199px"></i><i style="background-size:100% 23px,100% 163px,100% 222px"></i><i style="background-size:100% 34px,100% 159px,100% 245px"></i><i style="background-size:100% 52px,100% 103px,100% 243px"></i><i style="background-size:100% 27px,100% 124px,100% 226px"></i><i style="background-size:100% 27px,100% 134px,100% 231px"></i><i style="background-size:100% 37px,100% 146px,100% 229px"></i><i style="background-size:100% 21px,100% 130px,100% 197px"></i><i style="background-size:100% 26px,100% 85px,100% 191px"></i><i style="background-size:100% 25px,100% 112px,100% 224px"></i><i style="background-size:100% 30px,100% 151px,100% 238px"></i><i style="background-size:100% 15px,100% 153px,100% 159px"></i><i style="background-size:100% 25px,100% 84px,100% 204px"></i><i style="background-size:100% 22px,100% 173px,100% 256px"></i><i style="background-size:100% 28px,100% 144px,100% 227px"></i><i style="background-size:100% 26px,100% 159px,100% 195px"></i><i style="background-size:100% 40px,100% 173px,100% 259px"></i><i style="background-size:100% 30px,100% 184px,100% 279px"></i><i style="background-size:100% 24px,100% 165px,100% 232px"></i><i style="background-size:100% 21px,100% 179px,100% 268px"></i><i style="background-size:100% 24px,100% 125px,100% 212px"></i><i style="background-size:100% 15px,100% 201px,100% 228px"></i><i style="background-size:100% 57px,100% 198px,100% 282px"></i><i style="background-size:100% 27px,100% 199px,100% 254px"></i><i style="background-size:100% 32px,100% 198px,100% 282px"></i><i style="background-size:100% 25px,100% 189px,100% 287px"></i><i style="background-size:100% 24px,100% 194px,100% 219px"></i><i style="background-size:100% 31px,100% 188px,100% 254px"></i><i style="background-size:100% 37px,100% 146px,100% 266px"></i><i style="background-size:100% 23px,100% 171px,100% 266px"></i><i style="background-size:100% 27px,100% 109px,100% 272px"></i><i style="background-size:100% 33px,100% 143px,100% 284px"></i><i style="background-size:100% 15px,100% 187px,100% 290px"></i><i style="background-size:100% 30px,100% 196px,100% 263px"></i><i style="background-size:100% 27px,100% 155px,100% 228px"></i><i style="background-size:100% 28px,100% 156px,100% 285px"></i><i style="background-size:100% 38px,100% 195px,100% 285px"></i><i style="background-size:100% 27px,100% 216px,100% 223px"></i><i style="background-size:100% 26px,100% 155px,100% 255px"></i><i style="background-size:100% 27px,100% 157px,100% 260px"></i><i style="background-size:100% 35px,100% 184px,100% 267px"></i><i style="background-size:100% 30px,100% 149px,100% 244px"></i><i style="background-size:100% 21px,100% 181px,100% 272px"></i><i style="background-size:100% 26px,100% 167px,100% 222px"></i><i style="background-size:100% 22px,100% 163px,100% 270px"></i><i style="background-size:100% 39px,100% 176px,100% 228px"></i><i style="background-size:100% 47px,100% 159px,100% 278px"></i><i style="background-size:100% 18px,100% 163px,100% 257px"></i><i style="background-size:100% 19px,100% 205px,100% 276px"></i><i style="background-size:100% 30px,100% 185px,100% 247px"></i><i style="background-size:100% 26px,100% 224px,100% 266px"></i><i style="background-size:100% 22px,100% 166px,100% 269px"></i><i style="background-size:100% 29px,100% 170px,100% 248px"></i><i style="background-size:100% 21px,100% 161px,100% 293px"></i><i style="background-size:100% 12px,100% 196px,100% 234px"></i><i style="background-size:100% 20px,100% 133px,100% 285px"></i><i style="background-size:100% 23px,100% 177px,100% 290px"></i><i style="background-size:100% 30px,100% 162px,100% 234px"></i><i style="background-size:100% 21px,100% 190px,100% 257px"></i><i style="background-size:100% 30px,100% 164px,100% 304px"></i><i style="background-size:100% 26px,100% 178px,100% 283px"></i><i style="background-size:100% 23px,100% 199px,100% 302px"></i><i style="background-size:100% 28px,100% 193px,100% 306px"></i><i style="background-size:100% 23px,100% 137px,100% 296px"></i><i style="background-size:100% 13px,100% 213px,100% 298px"></i><i style="background-size:100% 20px,100% 153px,100% 249px"></i><i style="background-size:100% 18px,100% 229px,100% 194px"></i><i style="background-size:100% 28px,100% 149px,100% 268px"></i><i style="background-size:100% 28px,100% 62px,100% 260px"></i><i style="background-size:100% 26px,100% 113px,100% 253px"></i><i style="background-size:100% 26px,100% 157px,100% 283px"></i><i style="background-size:100% 20px,100% 98px,100% 213px"></i><i style="background-size:100% 3px,100% 182px,100% 248px"></i><i style="background-size:100% 8px,100% 179px,100% 258px"></i><i style="background-size:100% 23px,100% 138px,100% 236px"></i><i style="background-size:100% 18px,100% 159px,100% 254px"></i><i style="background-size:100% 25px,100% 135px,100% 260px"></i><i style="background-size:100% 11px,100% 168px,100% 265px"></i><i style="background-size:100% 26px,100% 136px,100% 252px"></i><i style="background-size:100% 17px,100% 167px,100% 221px"></i><i style="background-size:100% 25px,100% 161px,100% 239px"></i><i style="background-size:100% 33px,100% 162px,100% 238px"></i><i style="background-size:100% 9px,100% 148px,100% 262px"></i><i style="background-size:100% 22px,100% 120px,100% 201px"></i><i style="background-size:100% 16px,100% 165px,100% 233px"></i><i style="background-size:100% 30px,100% 121px,100% 187px"></i><i style="background-size:100% 24px,100% 161px,100% 258px"></i><i style="background-size:100% 17px,100% 157px,100% 253px"></i><i style="background-size:100% 28px,100% 126px,100% 233px"></i><i style="background-size:100% 30px,100% 137px,100% 184px"></i><i style="background-size:100% 29px,100% 152px,100% 208px"></i><i style="background-size:100% 21px,100% 152px,100% 258px"></i><i style="background-size:100% 27px,100% 156px,100% 254px"></i><i style="background-size:100% 20px,100% 86px,100% 179px"></i><i style="background-size:100% 30px,100% 122px,100% 243px"></i><i style="background-size:100% 20px,100% 115px,100% 236px"></i><i style="background-size:100% 9px,100% 164px,100% 220px"></i><i style="background-size:100% 16px,100% 156px,100% 237px"></i><i style="background-size:100% 34px,100% 224px,100% 204px"></i><i style="background-size:100% 15px,100% 169px,100% 245px"></i><i style="background-size:100% 25px,100% 159px,100% 247px"></i><i style="background-size:100% 33px,100% 168px,100% 237px"></i><i style="background-size:100% 13px,100% 175px,100% 274px"></i><i style="background-size:100% 38px,100% 257px,100% 276px"></i><i style="background-size:100% 31px,100% 200px,100% 311px"></i><i style="background-size:100% 22px,100% 222px,100% 313px"></i><i style="background-size:100% 43px,100% 136px,100% 248px"></i><i style="background-size:100% 44px,100% 191px,100% 246px"></i><i style="background-size:100% 43px,100% 127px,100% 183px"></i><i style="background-size:100% 56px,100% 181px,100% 286px"></i><i style="background-size:100% 32px,100% 236px,100% 286px"></i><i style="background-size:100% 47px,100% 175px,100% 273px"></i><i style="background-size:100% 43px,100% 188px,100% 279px"></i><i style="background-size:100% 30px,100% 280px,100% 276px"></i><i style="background-size:100% 30px,100% 155px,100% 285px"></i><i style="background-size:100% 32px,100% 117px,100% 235px"></i><i style="background-size:100% 33px,100% 253px,100% 310px"></i><i style="background-size:100% 72px,100% 190px,100% 282px"></i><i style="background-size:100% 70px,100% 235px,100% 235px"></i><i style="background-size:100% 54px,100% 202px,100% 282px"></i><i style="background-size:100% 47px,100% 187px,100% 282px"></i><i style="background-size:100% 29px,100% 292px,100% 301px"></i><i style="background-size:100% 47px,100% 209px,100% 193px"></i><i style="background-size:100% 51px,100% 169px,100% 259px"></i><i style="background-size:100% 35px,100% 220px,100% 239px"></i><i style="background-size:100% 42px,100% 186px,100% 293px"></i><i style="background-size:100% 39px,100% 179px,100% 293px"></i><i style="background-size:100% 43px,100% 188px,100% 286px"></i><i style="background-size:100% 43px,100% 201px,100% 301px"></i><i style="background-size:100% 33px,100% 181px,100% 306px"></i><i style="background-size:100% 43px,100% 204px,100% 290px"></i><i style="background-size:100% 49px,100% 167px,100% 293px"></i><i style="background-size:100% 40px,100% 205px,100% 242px"></i><i style="background-size:100% 48px,100% 162px,100% 271px"></i><i style="background-size:100% 49px,100% 197px,100% 270px"></i><i style="background-size:100% 48px,100% 209px,100% 289px"></i><i style="background-size:100% 40px,100% 167px,100% 274px"></i><i style="background-size:100% 34px,100% 213px,100% 295px"></i><i style="background-size:100% 50px,100% 171px,100% 283px"></i><i style="background-size:100% 34px,100% 204px,100% 290px"></i><i style="background-size:100% 48px,100% 188px,100% 268px"></i><i style="background-size:100% 55px,100% 151px,100% 303px"></i><i style="background-size:100% 37px,100% 240px,100% 302px"></i><i style="background-size:100% 48px,100% 198px,100% 312px"></i><i style="background-size:100% 24px,100% 186px,100% 313px"></i><i style="background-size:100% 40px,100% 176px,100% 313px"></i><i style="background-size:100% 54px,100% 147px,100% 220px"></i><i style="background-size:100% 53px,100% 223px,100% 299px"></i><i style="background-size:100% 46px,100% 196px,100% 313px"></i><i style="background-size:100% 35px,100% 219px,100% 313px"></i><i style="background-size:100% 42px,100% 189px,100% 313px"></i><i style="background-size:100% 39px,100% 137px,100% 255px"></i><i style="background-size:100% 47px,100% 158px,100% 301px"></i><i style="background-size:100% 49px,100% 206px,100% 313px"></i><i style="background-size:100% 47px,100% 211px,100% 288px"></i><i style="background-size:100% 44px,100% 219px,100% 280px"></i><i style="background-size:100% 38px,100% 166px,100% 291px"></i><i style="background-size:100% 40px,100% 247px,100% 302px"></i><i style="background-size:100% 32px,100% 174px,100% 276px"></i><i style="background-size:100% 58px,100% 187px,100% 294px"></i><i style="background-size:100% 37px,100% 258px,100% 273px"></i><i style="background-size:100% 43px,100% 233px,100% 297px"></i><i style="background-size:100% 43px,100% 225px,100% 296px"></i><i style="background-size:100% 40px,100% 208px,100% 307px"></i><i style="background-size:100% 31px,100% 178px,100% 296px"></i><i style="background-size:100% 42px,100% 207px,100% 276px"></i><i style="background-size:100% 34px,100% 162px,100% 275px"></i><i style="background-size:100% 42px,100% 174px,100% 273px"></i><i style="background-size:100% 35px,100% 198px,100% 288px"></i><i style="background-size:100% 21px,100% 183px,100% 312px"></i><i style="background-size:100% 41px,100% 110px,100% 283px"></i><i style="background-size:100% 67px,100% 238px,100% 297px"></i><i style="background-size:100% 39px,100% 194px,100% 304px"></i><i style="background-size:100% 34px,100% 237px,100% 313px"></i><i style="background-size:100% 40px,100% 258px,100% 275px"></i><i style="background-size:100% 43px,100% 159px,100% 265px"></i><i style="background-size:100% 44px,100% 236px,100% 254px"></i><i style="background-size:100% 35px,100% 196px,100% 308px"></i><i style="background-size:100% 36px,100% 132px,100% 230px"></i><i style="background-size:100% 30px,100% 206px,100% 282px"></i><i style="background-size:100% 33px,100% 212px,100% 313px"></i><i style="background-size:100% 43px,100% 296px,100% 284px"></i><i style="background-size:100% 27px,100% 237px,100% 289px"></i><i style="background-size:100% 42px,100% 191px,100% 313px"></i><i style="background-size:100% 39px,100% 237px,100% 313px"></i><i style="background-size:100% 39px,100% 212px,100% 307px"></i><i style="background-size:100% 39px,100% 212px,100% 303px"></i><i style="background-size:100% 42px,100% 208px,100% 272px"></i><i style="background-size:100% 57px,100% 232px,100% 303px"></i><i style="background-size:100% 46px,100% 235px,100% 279px"></i><i style="background-size:100% 34px,100% 127px,100% 250px"></i><i style="background-size:100% 39px,100% 207px,100% 313px"></i><i style="background-size:100% 40px,100% 211px,100% 297px"></i><i style="background-size:100% 29px,100% 197px,100% 281px"></i><i style="background-size:100% 29px,100% 199px,100% 310px"></i><i style="background-size:100% 46px,100% 178px,100% 259px"></i><i style="background-size:100% 34px,100% 184px,100% 311px"></i><i style="background-size:100% 33px,100% 177px,100% 297px"></i><i style="background-size:100% 45px,100% 216px,100% 313px"></i><i style="background-size:100% 31px,100% 208px,100% 230px"></i><i style="background-size:100% 42px,100% 174px,100% 250px"></i><i style="background-size:100% 37px,100% 180px,100% 313px"></i><i style="background-size:100% 19px,100% 215px,100% 313px"></i><i style="background-size:100% 39px,100% 144px,100% 221px"></i><i style="background-size:100% 33px,100% 222px,100% 281px"></i><i style="background-size:100% 52px,100% 202px,100% 279px"></i><i style="background-size:100% 35px,100% 227px,100% 258px"></i><i style="background-size:100% 40px,100% 159px,100% 247px"></i><i style="background-size:100% 56px,100% 216px,100% 292px"></i><i style="background-size:100% 51px,100% 211px,100% 247px"></i><i style="background-size:100% 41px,100% 211px,100% 258px"></i><i style="background-size:100% 39px,100% 128px,100% 221px"></i><i style="background-size:100% 53px,100% 235px,100% 215px"></i><i style="background-size:100% 47px,100% 222px,100% 270px"></i><i style="background-size:100% 43px,100% 204px,100% 313px"></i><i style="background-size:100% 39px,100% 220px,100% 291px"></i><i style="background-size:100% 42px,100% 190px,100% 243px"></i><i style="background-size:100% 42px,100% 200px,100% 298px"></i><i style="background-size:100% 41px,100% 212px,100% 313px"></i><i style="background-size:100% 40px,100% 238px,100% 218px"></i><i style="background-size:100% 42px,100% 278px,100% 233px"></i><i style="background-size:100% 49px,100% 213px,100% 313px"></i><i style="background-size:100% 48px,100% 135px,100% 310px"></i><i style="background-size:100% 33px,100% 200px,100% 307px"></i><i style="background-size:100% 28px,100% 214px,100% 275px"></i><i style="background-size:100% 45px,100% 208px,100% 276px"></i><i style="background-size:100% 48px,100% 234px,100% 263px"></i><i style="background-size:100% 25px,100% 200px,100% 313px"></i><i style="background-size:100% 36px,100% 242px,100% 313px"></i><i style="background-size:100% 41px,100% 222px,100% 265px"></i><i style="background-size:100% 33px,100% 186px,100% 294px"></i><i style="background-size:100% 49px,100% 216px,100% 278px"></i><i style="background-size:100% 46px,100% 225px,100% 298px"></i><i style="background-size:100% 31px,100% 271px,100% 256px"></i><i style="background-size:100% 33px,100% 129px,100% 276px"></i><i style="background-size:100% 39px,100% 220px,100% 283px"></i><i style="background-size:100% 33px,100% 212px,100% 290px"></i><i style="background-size:100% 41px,100% 145px,100% 281px"></i><i style="background-size:100% 49px,100% 194px,100% 295px"></i><i style="background-size:100% 47px,100% 235px,100% 299px"></i><i style="background-size:100% 44px,100% 179px,100% 278px"></i><i style="background-size:100% 47px,100% 194px,100% 281px"></i><i style="background-size:100% 44px,100% 175px,100% 296px"></i><i style="background-size:100% 43px,100% 146px,100% 294px"></i><i style="background-size:100% 45px,100% 173px,100% 279px"></i><i style="background-size:100% 56px,100% 180px,100% 278px"></i><i style="background-size:100% 31px,100% 189px,100% 264px"></i><i style="background-size:100% 48px,100% 221px,100% 303px"></i><i style="background-size:100% 47px,100% 188px,100% 281px"></i><i style="background-size:100% 30px,100% 266px,100% 280px"></i><i style="background-size:100% 47px,100% 189px,100% 291px"></i><i style="background-size:100% 48px,100% 178px,100% 287px"></i><i style="background-size:100% 35px,100% 203px,100% 295px"></i><i style="background-size:100% 32px,100% 175px,100% 278px"></i><i style="background-size:100% 38px,100% 182px,100% 254px"></i><i style="background-size:100% 66px,100% 201px,100% 277px"></i><i style="background-size:100% 28px,100% 194px,100% 303px"></i><i style="background-size:100% 63px,100% 230px,100% 296px"></i><i style="background-size:100% 40px,100% 256px,100% 268px"></i><i style="background-size:100% 28px,100% 186px,100% 280px"></i><i style="background-size:100% 60px,100% 194px,100% 207px"></i><i style="background-size:100% 49px,100% 231px,100% 272px"></i><i style="background-size:100% 29px,100% 210px,100% 308px"></i><i style="background-size:100% 45px,100% 185px,100% 313px"></i><i style="background-size:100% 39px,100% 232px,100% 260px"></i><i style="background-size:100% 41px,100% 227px,100% 261px"></i><i style="background-size:100% 43px,100% 205px,100% 313px"></i><i style="background-size:100% 39px,100% 223px,100% 313px"></i><i style="background-size:100% 76px,100% 233px,100% 282px"></i><i style="background-size:100% 52px,100% 182px,100% 255px"></i><i style="background-size:100% 44px,100% 198px,100% 313px"></i><i style="background-size:100% 48px,100% 217px,100% 312px"></i><i style="background-size:100% 35px,100% 165px,100% 210px"></i><i style="background-size:100% 34px,100% 157px,100% 294px"></i><i style="background-size:100% 39px,100% 127px,100% 265px"></i><i style="background-size:100% 37px,100% 287px,100% 267px"></i><i style="background-size:100% 43px,100% 199px,100% 313px"></i><i style="background-size:100% 31px,100% 213px,100% 290px"></i><i style="background-size:100% 32px,100% 208px,100% 297px"></i><i style="background-size:100% 29px,100% 195px,100% 313px"></i><i style="background-size:100% 37px,100% 155px,100% 273px"></i><i style="background-size:100% 34px,100% 185px,100% 313px"></i><i style="background-size:100% 40px,100% 246px,100% 313px"></i><i style="background-size:100% 35px,100% 161px,100% 286px"></i><i style="background-size:100% 38px,100% 224px,100% 309px"></i><i style="background-size:100% 41px,100% 195px,100% 293px"></i><i style="background-size:100% 42px,100% 195px,100% 313px"></i><i style="background-size:100% 40px,100% 174px,100% 311px"></i><i style="background-size:100% 37px,100% 222px,100% 296px"></i><i style="background-size:100% 55px,100% 207px,100% 284px"></i><i style="background-size:100% 43px,100% 189px,100% 289px"></i><i style="background-size:100% 43px,100% 227px,100% 305px"></i><i style="background-size:100% 42px,100% 214px,100% 300px"></i><i style="background-size:100% 44px,100% 186px,100% 304px"></i><i style="background-size:100% 35px,100% 192px,100% 290px"></i><i style="background-size:100% 36px,100% 206px,100% 300px"></i><i style="background-size:100% 39px,100% 183px,100% 313px"></i><i style="background-size:100% 36px,100% 242px,100% 297px"></i><i style="background-size:100% 39px,100% 231px,100% 313px"></i><i style="background-size:100% 38px,100% 202px,100% 307px"></i><i style="background-size:100% 30px,100% 226px,100% 288px"></i><i style="background-size:100% 35px,100% 196px,100% 269px"></i><i style="background-size:100% 41px,100% 217px,100% 223px"></i><i style="background-size:100% 31px,100% 207px,100% 313px"></i><i style="background-size:100% 34px,100% 229px,100% 313px"></i><i style="background-size:100% 34px,100% 188px,100% 246px"></i><i style="background-size:100% 34px,100% 214px,100% 233px"></i><i style="background-size:100% 33px,100% 163px,100% 310px"></i><i style="background-size:100% 58px,100% 189px,100% 313px"></i><i style="background-size:100% 34px,100% 207px,100% 313px"></i><i style="background-size:100% 32px,100% 198px,100% 280px"></i><i style="background-size:100% 15px,100% 199px,100% 290px"></i><i style="background-size:100% 9px,100% 158px,100% 269px"></i><i style="background-size:100% 8px,100% 139px,100% 241px"></i><i style="background-size:100% 0px,100% 76px,100% 124px"></i><i style="background-size:100% 0px,100% 0px,100% 0px"></i><i style="background-size:100% 0px,100% 0px,100% 0px"></i><i style="background-size:100% 0px,100% 0px,100% 0px"></i><i style="background-size:100% 0px,100% 0px,100% 0px"></i></div><div class="a" style="left:319px;top:533px;width:1486px;height:5px;background:#7a8596;border-top:1px solid #b8bec8;border-bottom:1px solid #9aa2ae"></div><div class="spec c2" style="top:538px;height:314px"><i style="background-size:100% 23px,100% 190px,100% 306px"></i><i style="background-size:100% 35px,100% 202px,100% 290px"></i><i style="background-size:100% 31px,100% 168px,100% 293px"></i><i style="background-size:100% 14px,100% 152px,100% 314px"></i><i style="background-size:100% 39px,100% 152px,100% 289px"></i><i style="background-size:100% 17px,100% 176px,100% 314px"></i><i style="background-size:100% 36px,100% 176px,100% 214px"></i><i style="background-size:100% 32px,100% 218px,100% 256px"></i><i style="background-size:100% 24px,100% 198px,100% 247px"></i><i style="background-size:100% 37px,100% 162px,100% 297px"></i><i style="background-size:100% 27px,100% 117px,100% 298px"></i><i style="background-size:100% 26px,100% 182px,100% 214px"></i><i style="background-size:100% 42px,100% 177px,100% 257px"></i><i style="background-size:100% 30px,100% 166px,100% 276px"></i><i style="background-size:100% 20px,100% 174px,100% 298px"></i><i style="background-size:100% 36px,100% 151px,100% 286px"></i><i style="background-size:100% 31px,100% 171px,100% 307px"></i><i style="background-size:100% 69px,100% 157px,100% 309px"></i><i style="background-size:100% 41px,100% 217px,100% 283px"></i><i style="background-size:100% 17px,100% 175px,100% 276px"></i><i style="background-size:100% 27px,100% 226px,100% 292px"></i><i style="background-size:100% 27px,100% 191px,100% 291px"></i><i style="background-size:100% 21px,100% 142px,100% 314px"></i><i style="background-size:100% 32px,100% 166px,100% 314px"></i><i style="background-size:100% 31px,100% 200px,100% 201px"></i><i style="background-size:100% 21px,100% 160px,100% 276px"></i><i style="background-size:100% 27px,100% 171px,100% 309px"></i><i style="background-size:100% 34px,100% 166px,100% 311px"></i><i style="background-size:100% 32px,100% 144px,100% 302px"></i><i style="background-size:100% 28px,100% 153px,100% 210px"></i><i style="background-size:100% 15px,100% 197px,100% 314px"></i><i style="background-size:100% 28px,100% 182px,100% 314px"></i><i style="background-size:100% 33px,100% 208px,100% 303px"></i><i style="background-size:100% 25px,100% 189px,100% 314px"></i><i style="background-size:100% 29px,100% 166px,100% 280px"></i><i style="background-size:100% 28px,100% 228px,100% 292px"></i><i style="background-size:100% 34px,100% 193px,100% 281px"></i><i style="background-size:100% 31px,100% 199px,100% 314px"></i><i style="background-size:100% 31px,100% 175px,100% 241px"></i><i style="background-size:100% 27px,100% 199px,100% 250px"></i><i style="background-size:100% 31px,100% 202px,100% 272px"></i><i style="background-size:100% 28px,100% 171px,100% 312px"></i><i style="background-size:100% 29px,100% 165px,100% 308px"></i><i style="background-size:100% 33px,100% 156px,100% 271px"></i><i style="background-size:100% 27px,100% 181px,100% 266px"></i><i style="background-size:100% 28px,100% 138px,100% 244px"></i><i style="background-size:100% 31px,100% 172px,100% 276px"></i><i style="background-size:100% 14px,100% 190px,100% 313px"></i><i style="background-size:100% 22px,100% 146px,100% 298px"></i><i style="background-size:100% 20px,100% 205px,100% 274px"></i><i style="background-size:100% 21px,100% 146px,100% 273px"></i><i style="background-size:100% 26px,100% 171px,100% 272px"></i><i style="background-size:100% 31px,100% 274px,100% 314px"></i><i style="background-size:100% 25px,100% 200px,100% 262px"></i><i style="background-size:100% 33px,100% 176px,100% 282px"></i><i style="background-size:100% 42px,100% 184px,100% 276px"></i><i style="background-size:100% 30px,100% 141px,100% 293px"></i><i style="background-size:100% 32px,100% 163px,100% 281px"></i><i style="background-size:100% 35px,100% 169px,100% 268px"></i><i style="background-size:100% 26px,100% 157px,100% 310px"></i><i style="background-size:100% 32px,100% 175px,100% 304px"></i><i style="background-size:100% 37px,100% 142px,100% 262px"></i><i style="background-size:100% 28px,100% 201px,100% 303px"></i><i style="background-size:100% 29px,100% 162px,100% 294px"></i><i style="background-size:100% 25px,100% 165px,100% 314px"></i><i style="background-size:100% 25px,100% 154px,100% 314px"></i><i style="background-size:100% 31px,100% 167px,100% 304px"></i><i style="background-size:100% 38px,100% 173px,100% 274px"></i><i style="background-size:100% 34px,100% 140px,100% 287px"></i><i style="background-size:100% 15px,100% 178px,100% 311px"></i><i style="background-size:100% 24px,100% 149px,100% 314px"></i><i style="background-size:100% 33px,100% 193px,100% 297px"></i><i style="background-size:100% 24px,100% 173px,100% 314px"></i><i style="background-size:100% 31px,100% 201px,100% 298px"></i><i style="background-size:100% 31px,100% 144px,100% 314px"></i><i style="background-size:100% 33px,100% 169px,100% 296px"></i><i style="background-size:100% 25px,100% 157px,100% 314px"></i><i style="background-size:100% 38px,100% 146px,100% 300px"></i><i style="background-size:100% 24px,100% 179px,100% 246px"></i><i style="background-size:100% 33px,100% 193px,100% 265px"></i><i style="background-size:100% 12px,100% 190px,100% 280px"></i><i style="background-size:100% 32px,100% 161px,100% 247px"></i><i style="background-size:100% 43px,100% 219px,100% 287px"></i><i style="background-size:100% 31px,100% 169px,100% 310px"></i><i style="background-size:100% 32px,100% 180px,100% 314px"></i><i style="background-size:100% 29px,100% 181px,100% 307px"></i><i style="background-size:100% 31px,100% 177px,100% 263px"></i><i style="background-size:100% 32px,100% 119px,100% 279px"></i><i style="background-size:100% 17px,100% 189px,100% 265px"></i><i style="background-size:100% 28px,100% 178px,100% 310px"></i><i style="background-size:100% 35px,100% 156px,100% 274px"></i><i style="background-size:100% 14px,100% 157px,100% 237px"></i><i style="background-size:100% 29px,100% 166px,100% 299px"></i><i style="background-size:100% 10px,100% 186px,100% 294px"></i><i style="background-size:100% 32px,100% 197px,100% 268px"></i><i style="background-size:100% 32px,100% 173px,100% 295px"></i><i style="background-size:100% 36px,100% 156px,100% 270px"></i><i style="background-size:100% 30px,100% 181px,100% 231px"></i><i style="background-size:100% 31px,100% 171px,100% 294px"></i><i style="background-size:100% 31px,100% 184px,100% 276px"></i><i style="background-size:100% 33px,100% 197px,100% 299px"></i><i style="background-size:100% 36px,100% 165px,100% 266px"></i><i style="background-size:100% 35px,100% 173px,100% 279px"></i><i style="background-size:100% 21px,100% 189px,100% 262px"></i><i style="background-size:100% 44px,100% 180px,100% 292px"></i><i style="background-size:100% 41px,100% 165px,100% 302px"></i><i style="background-size:100% 29px,100% 167px,100% 304px"></i><i style="background-size:100% 35px,100% 136px,100% 296px"></i><i style="background-size:100% 35px,100% 209px,100% 278px"></i><i style="background-size:100% 21px,100% 175px,100% 279px"></i><i style="background-size:100% 40px,100% 215px,100% 304px"></i><i style="background-size:100% 31px,100% 142px,100% 286px"></i><i style="background-size:100% 17px,100% 138px,100% 302px"></i><i style="background-size:100% 35px,100% 248px,100% 296px"></i><i style="background-size:100% 30px,100% 131px,100% 245px"></i><i style="background-size:100% 28px,100% 199px,100% 290px"></i><i style="background-size:100% 26px,100% 223px,100% 304px"></i><i style="background-size:100% 27px,100% 152px,100% 284px"></i><i style="background-size:100% 19px,100% 148px,100% 268px"></i><i style="background-size:100% 51px,100% 183px,100% 206px"></i><i style="background-size:100% 35px,100% 215px,100% 305px"></i><i style="background-size:100% 26px,100% 108px,100% 249px"></i><i style="background-size:100% 34px,100% 124px,100% 295px"></i><i style="background-size:100% 28px,100% 160px,100% 310px"></i><i style="background-size:100% 11px,100% 165px,100% 313px"></i><i style="background-size:100% 30px,100% 189px,100% 287px"></i><i style="background-size:100% 39px,100% 160px,100% 274px"></i><i style="background-size:100% 28px,100% 128px,100% 302px"></i><i style="background-size:100% 40px,100% 150px,100% 285px"></i><i style="background-size:100% 38px,100% 165px,100% 302px"></i><i style="background-size:100% 56px,100% 130px,100% 300px"></i><i style="background-size:100% 29px,100% 139px,100% 292px"></i><i style="background-size:100% 34px,100% 188px,100% 306px"></i><i style="background-size:100% 34px,100% 221px,100% 280px"></i><i style="background-size:100% 21px,100% 256px,100% 264px"></i><i style="background-size:100% 26px,100% 113px,100% 234px"></i><i style="background-size:100% 32px,100% 258px,100% 304px"></i><i style="background-size:100% 30px,100% 234px,100% 281px"></i><i style="background-size:100% 24px,100% 177px,100% 278px"></i><i style="background-size:100% 32px,100% 172px,100% 258px"></i><i style="background-size:100% 30px,100% 143px,100% 277px"></i><i style="background-size:100% 27px,100% 184px,100% 287px"></i><i style="background-size:100% 21px,100% 118px,100% 272px"></i><i style="background-size:100% 25px,100% 143px,100% 309px"></i><i style="background-size:100% 34px,100% 150px,100% 296px"></i><i style="background-size:100% 30px,100% 196px,100% 270px"></i><i style="background-size:100% 33px,100% 154px,100% 305px"></i><i style="background-size:100% 23px,100% 152px,100% 262px"></i><i style="background-size:100% 30px,100% 169px,100% 287px"></i><i style="background-size:100% 12px,100% 247px,100% 303px"></i><i style="background-size:100% 57px,100% 191px,100% 314px"></i><i style="background-size:100% 24px,100% 288px,100% 296px"></i><i style="background-size:100% 28px,100% 254px,100% 302px"></i><i style="background-size:100% 52px,100% 218px,100% 314px"></i><i style="background-size:100% 36px,100% 173px,100% 314px"></i><i style="background-size:100% 30px,100% 170px,100% 311px"></i><i style="background-size:100% 34px,100% 176px,100% 271px"></i><i style="background-size:100% 19px,100% 125px,100% 257px"></i><i style="background-size:100% 30px,100% 155px,100% 233px"></i><i style="background-size:100% 24px,100% 176px,100% 282px"></i><i style="background-size:100% 35px,100% 174px,100% 297px"></i><i style="background-size:100% 24px,100% 160px,100% 308px"></i><i style="background-size:100% 24px,100% 195px,100% 255px"></i><i style="background-size:100% 32px,100% 135px,100% 296px"></i><i style="background-size:100% 34px,100% 195px,100% 314px"></i><i style="background-size:100% 25px,100% 182px,100% 308px"></i><i style="background-size:100% 25px,100% 194px,100% 314px"></i><i style="background-size:100% 22px,100% 182px,100% 285px"></i><i style="background-size:100% 22px,100% 183px,100% 300px"></i><i style="background-size:100% 32px,100% 176px,100% 314px"></i><i style="background-size:100% 25px,100% 236px,100% 314px"></i><i style="background-size:100% 18px,100% 217px,100% 304px"></i><i style="background-size:100% 28px,100% 212px,100% 297px"></i><i style="background-size:100% 32px,100% 162px,100% 314px"></i><i style="background-size:100% 27px,100% 174px,100% 247px"></i><i style="background-size:100% 29px,100% 155px,100% 278px"></i><i style="background-size:100% 29px,100% 96px,100% 218px"></i><i style="background-size:100% 24px,100% 153px,100% 300px"></i><i style="background-size:100% 29px,100% 127px,100% 300px"></i><i style="background-size:100% 29px,100% 213px,100% 201px"></i><i style="background-size:100% 15px,100% 147px,100% 286px"></i><i style="background-size:100% 25px,100% 146px,100% 257px"></i><i style="background-size:100% 36px,100% 215px,100% 297px"></i><i style="background-size:100% 18px,100% 113px,100% 274px"></i><i style="background-size:100% 25px,100% 153px,100% 310px"></i><i style="background-size:100% 29px,100% 140px,100% 208px"></i><i style="background-size:100% 23px,100% 143px,100% 261px"></i><i style="background-size:100% 31px,100% 104px,100% 215px"></i><i style="background-size:100% 49px,100% 148px,100% 241px"></i><i style="background-size:100% 17px,100% 147px,100% 159px"></i><i style="background-size:100% 26px,100% 144px,100% 209px"></i><i style="background-size:100% 34px,100% 87px,100% 225px"></i><i style="background-size:100% 21px,100% 130px,100% 233px"></i><i style="background-size:100% 6px,100% 88px,100% 197px"></i><i style="background-size:100% 27px,100% 108px,100% 247px"></i><i style="background-size:100% 25px,100% 70px,100% 192px"></i><i style="background-size:100% 26px,100% 168px,100% 222px"></i><i style="background-size:100% 25px,100% 142px,100% 233px"></i><i style="background-size:100% 22px,100% 154px,100% 234px"></i><i style="background-size:100% 25px,100% 58px,100% 194px"></i><i style="background-size:100% 30px,100% 137px,100% 204px"></i><i style="background-size:100% 20px,100% 140px,100% 258px"></i><i style="background-size:100% 26px,100% 146px,100% 223px"></i><i style="background-size:100% 29px,100% 124px,100% 236px"></i><i style="background-size:100% 38px,100% 89px,100% 199px"></i><i style="background-size:100% 32px,100% 126px,100% 252px"></i><i style="background-size:100% 16px,100% 137px,100% 201px"></i><i style="background-size:100% 19px,100% 82px,100% 178px"></i><i style="background-size:100% 26px,100% 125px,100% 195px"></i><i style="background-size:100% 33px,100% 121px,100% 174px"></i><i style="background-size:100% 19px,100% 171px,100% 175px"></i><i style="background-size:100% 23px,100% 36px,100% 207px"></i><i style="background-size:100% 18px,100% 107px,100% 227px"></i><i style="background-size:100% 20px,100% 151px,100% 204px"></i><i style="background-size:100% 19px,100% 139px,100% 214px"></i><i style="background-size:100% 32px,100% 152px,100% 237px"></i><i style="background-size:100% 20px,100% 79px,100% 197px"></i><i style="background-size:100% 37px,100% 130px,100% 181px"></i><i style="background-size:100% 32px,100% 150px,100% 189px"></i><i style="background-size:100% 22px,100% 128px,100% 190px"></i><i style="background-size:100% 32px,100% 97px,100% 205px"></i><i style="background-size:100% 25px,100% 119px,100% 231px"></i><i style="background-size:100% 43px,100% 108px,100% 193px"></i><i style="background-size:100% 16px,100% 96px,100% 223px"></i><i style="background-size:100% 31px,100% 115px,100% 136px"></i><i style="background-size:100% 27px,100% 105px,100% 190px"></i><i style="background-size:100% 26px,100% 126px,100% 220px"></i><i style="background-size:100% 24px,100% 142px,100% 232px"></i><i style="background-size:100% 33px,100% 137px,100% 193px"></i><i style="background-size:100% 32px,100% 84px,100% 230px"></i><i style="background-size:100% 20px,100% 109px,100% 182px"></i><i style="background-size:100% 34px,100% 137px,100% 244px"></i><i style="background-size:100% 7px,100% 98px,100% 217px"></i><i style="background-size:100% 16px,100% 129px,100% 215px"></i><i style="background-size:100% 14px,100% 159px,100% 196px"></i><i style="background-size:100% 22px,100% 141px,100% 194px"></i><i style="background-size:100% 24px,100% 93px,100% 206px"></i><i style="background-size:100% 21px,100% 125px,100% 244px"></i><i style="background-size:100% 17px,100% 104px,100% 256px"></i><i style="background-size:100% 37px,100% 188px,100% 253px"></i><i style="background-size:100% 31px,100% 164px,100% 253px"></i><i style="background-size:100% 20px,100% 41px,100% 206px"></i><i style="background-size:100% 63px,100% 91px,100% 235px"></i><i style="background-size:100% 17px,100% 151px,100% 253px"></i><i style="background-size:100% 15px,100% 147px,100% 246px"></i><i style="background-size:100% 36px,100% 115px,100% 236px"></i><i style="background-size:100% 29px,100% 151px,100% 219px"></i><i style="background-size:100% 42px,100% 142px,100% 259px"></i><i style="background-size:100% 22px,100% 129px,100% 250px"></i><i style="background-size:100% 14px,100% 146px,100% 258px"></i><i style="background-size:100% 23px,100% 152px,100% 229px"></i><i style="background-size:100% 29px,100% 137px,100% 206px"></i><i style="background-size:100% 28px,100% 141px,100% 257px"></i><i style="background-size:100% 29px,100% 133px,100% 251px"></i><i style="background-size:100% 27px,100% 143px,100% 235px"></i><i style="background-size:100% 29px,100% 174px,100% 197px"></i><i style="background-size:100% 23px,100% 145px,100% 271px"></i><i style="background-size:100% 31px,100% 215px,100% 262px"></i><i style="background-size:100% 34px,100% 160px,100% 286px"></i><i style="background-size:100% 31px,100% 126px,100% 229px"></i><i style="background-size:100% 17px,100% 188px,100% 259px"></i><i style="background-size:100% 20px,100% 161px,100% 240px"></i><i style="background-size:100% 29px,100% 153px,100% 241px"></i><i style="background-size:100% 39px,100% 169px,100% 261px"></i><i style="background-size:100% 42px,100% 149px,100% 226px"></i><i style="background-size:100% 33px,100% 146px,100% 270px"></i><i style="background-size:100% 22px,100% 141px,100% 290px"></i><i style="background-size:100% 36px,100% 144px,100% 275px"></i><i style="background-size:100% 29px,100% 183px,100% 293px"></i><i style="background-size:100% 28px,100% 162px,100% 283px"></i><i style="background-size:100% 43px,100% 228px,100% 294px"></i><i style="background-size:100% 29px,100% 109px,100% 285px"></i><i style="background-size:100% 26px,100% 92px,100% 249px"></i><i style="background-size:100% 27px,100% 165px,100% 258px"></i><i style="background-size:100% 29px,100% 216px,100% 249px"></i><i style="background-size:100% 24px,100% 194px,100% 266px"></i><i style="background-size:100% 36px,100% 231px,100% 249px"></i><i style="background-size:100% 31px,100% 142px,100% 282px"></i><i style="background-size:100% 35px,100% 215px,100% 260px"></i><i style="background-size:100% 21px,100% 155px,100% 305px"></i><i style="background-size:100% 53px,100% 158px,100% 250px"></i><i style="background-size:100% 23px,100% 231px,100% 266px"></i><i style="background-size:100% 25px,100% 104px,100% 257px"></i><i style="background-size:100% 22px,100% 255px,100% 272px"></i><i style="background-size:100% 36px,100% 132px,100% 314px"></i><i style="background-size:100% 22px,100% 167px,100% 305px"></i><i style="background-size:100% 21px,100% 183px,100% 292px"></i><i style="background-size:100% 29px,100% 110px,100% 261px"></i><i style="background-size:100% 27px,100% 182px,100% 287px"></i><i style="background-size:100% 10px,100% 155px,100% 270px"></i><i style="background-size:100% 26px,100% 151px,100% 267px"></i><i style="background-size:100% 40px,100% 160px,100% 298px"></i><i style="background-size:100% 43px,100% 168px,100% 259px"></i><i style="background-size:100% 34px,100% 136px,100% 256px"></i><i style="background-size:100% 28px,100% 131px,100% 255px"></i><i style="background-size:100% 23px,100% 150px,100% 296px"></i><i style="background-size:100% 37px,100% 133px,100% 232px"></i><i style="background-size:100% 38px,100% 160px,100% 265px"></i><i style="background-size:100% 35px,100% 191px,100% 289px"></i><i style="background-size:100% 29px,100% 176px,100% 261px"></i><i style="background-size:100% 60px,100% 134px,100% 225px"></i><i style="background-size:100% 15px,100% 167px,100% 296px"></i><i style="background-size:100% 32px,100% 166px,100% 232px"></i><i style="background-size:100% 29px,100% 146px,100% 266px"></i><i style="background-size:100% 31px,100% 153px,100% 290px"></i><i style="background-size:100% 37px,100% 176px,100% 242px"></i><i style="background-size:100% 32px,100% 174px,100% 277px"></i><i style="background-size:100% 36px,100% 191px,100% 279px"></i><i style="background-size:100% 23px,100% 161px,100% 257px"></i><i style="background-size:100% 39px,100% 138px,100% 266px"></i><i style="background-size:100% 31px,100% 155px,100% 243px"></i><i style="background-size:100% 25px,100% 138px,100% 251px"></i><i style="background-size:100% 42px,100% 144px,100% 242px"></i><i style="background-size:100% 27px,100% 187px,100% 293px"></i><i style="background-size:100% 38px,100% 164px,100% 249px"></i><i style="background-size:100% 20px,100% 196px,100% 264px"></i><i style="background-size:100% 23px,100% 147px,100% 294px"></i><i style="background-size:100% 31px,100% 164px,100% 289px"></i><i style="background-size:100% 36px,100% 177px,100% 303px"></i><i style="background-size:100% 42px,100% 150px,100% 279px"></i><i style="background-size:100% 39px,100% 124px,100% 259px"></i><i style="background-size:100% 32px,100% 151px,100% 235px"></i><i style="background-size:100% 28px,100% 159px,100% 287px"></i><i style="background-size:100% 22px,100% 157px,100% 263px"></i><i style="background-size:100% 25px,100% 172px,100% 245px"></i><i style="background-size:100% 27px,100% 69px,100% 247px"></i><i style="background-size:100% 26px,100% 140px,100% 288px"></i><i style="background-size:100% 26px,100% 151px,100% 281px"></i><i style="background-size:100% 35px,100% 189px,100% 260px"></i><i style="background-size:100% 34px,100% 118px,100% 256px"></i><i style="background-size:100% 26px,100% 145px,100% 240px"></i><i style="background-size:100% 39px,100% 160px,100% 256px"></i><i style="background-size:100% 38px,100% 157px,100% 240px"></i><i style="background-size:100% 29px,100% 172px,100% 256px"></i><i style="background-size:100% 35px,100% 133px,100% 246px"></i><i style="background-size:100% 39px,100% 165px,100% 264px"></i><i style="background-size:100% 38px,100% 169px,100% 201px"></i><i style="background-size:100% 20px,100% 192px,100% 216px"></i><i style="background-size:100% 50px,100% 134px,100% 256px"></i><i style="background-size:100% 31px,100% 140px,100% 273px"></i><i style="background-size:100% 39px,100% 193px,100% 243px"></i><i style="background-size:100% 59px,100% 105px,100% 237px"></i><i style="background-size:100% 64px,100% 146px,100% 246px"></i><i style="background-size:100% 34px,100% 170px,100% 240px"></i><i style="background-size:100% 40px,100% 101px,100% 229px"></i><i style="background-size:100% 26px,100% 126px,100% 206px"></i><i style="background-size:100% 35px,100% 114px,100% 220px"></i><i style="background-size:100% 30px,100% 59px,100% 194px"></i><i style="background-size:100% 28px,100% 125px,100% 221px"></i><i style="background-size:100% 31px,100% 82px,100% 197px"></i><i style="background-size:100% 28px,100% 113px,100% 216px"></i><i style="background-size:100% 25px,100% 94px,100% 228px"></i><i style="background-size:100% 15px,100% 149px,100% 236px"></i><i style="background-size:100% 24px,100% 129px,100% 229px"></i><i style="background-size:100% 27px,100% 125px,100% 216px"></i><i style="background-size:100% 20px,100% 132px,100% 210px"></i><i style="background-size:100% 23px,100% 76px,100% 135px"></i><i style="background-size:100% 22px,100% 142px,100% 215px"></i><i style="background-size:100% 38px,100% 158px,100% 192px"></i><i style="background-size:100% 31px,100% 143px,100% 158px"></i><i style="background-size:100% 24px,100% 128px,100% 239px"></i><i style="background-size:100% 21px,100% 125px,100% 150px"></i><i style="background-size:100% 18px,100% 182px,100% 195px"></i><i style="background-size:100% 33px,100% 139px,100% 157px"></i><i style="background-size:100% 25px,100% 148px,100% 191px"></i><i style="background-size:100% 39px,100% 143px,100% 175px"></i><i style="background-size:100% 23px,100% 138px,100% 251px"></i><i style="background-size:100% 30px,100% 130px,100% 216px"></i><i style="background-size:100% 13px,100% 127px,100% 247px"></i><i style="background-size:100% 27px,100% 112px,100% 233px"></i><i style="background-size:100% 15px,100% 125px,100% 223px"></i><i style="background-size:100% 36px,100% 125px,100% 213px"></i><i style="background-size:100% 16px,100% 176px,100% 196px"></i><i style="background-size:100% 12px,100% 135px,100% 224px"></i><i style="background-size:100% 21px,100% 129px,100% 186px"></i><i style="background-size:100% 21px,100% 49px,100% 160px"></i><i style="background-size:100% 31px,100% 263px,100% 234px"></i><i style="background-size:100% 16px,100% 147px,100% 237px"></i><i style="background-size:100% 27px,100% 141px,100% 231px"></i><i style="background-size:100% 23px,100% 135px,100% 237px"></i><i style="background-size:100% 29px,100% 165px,100% 213px"></i><i style="background-size:100% 32px,100% 172px,100% 196px"></i><i style="background-size:100% 27px,100% 169px,100% 220px"></i><i style="background-size:100% 29px,100% 139px,100% 133px"></i><i style="background-size:100% 32px,100% 69px,100% 231px"></i><i style="background-size:100% 14px,100% 155px,100% 182px"></i><i style="background-size:100% 17px,100% 86px,100% 247px"></i><i style="background-size:100% 6px,100% 113px,100% 237px"></i><i style="background-size:100% 31px,100% 121px,100% 186px"></i><i style="background-size:100% 22px,100% 130px,100% 193px"></i><i style="background-size:100% 23px,100% 155px,100% 208px"></i><i style="background-size:100% 29px,100% 140px,100% 203px"></i><i style="background-size:100% 12px,100% 125px,100% 232px"></i><i style="background-size:100% 30px,100% 156px,100% 225px"></i><i style="background-size:100% 23px,100% 94px,100% 231px"></i><i style="background-size:100% 23px,100% 135px,100% 219px"></i><i style="background-size:100% 18px,100% 149px,100% 237px"></i><i style="background-size:100% 13px,100% 148px,100% 199px"></i><i style="background-size:100% 16px,100% 170px,100% 222px"></i><i style="background-size:100% 13px,100% 154px,100% 199px"></i><i style="background-size:100% 12px,100% 127px,100% 213px"></i><i style="background-size:100% 29px,100% 120px,100% 205px"></i><i style="background-size:100% 19px,100% 142px,100% 262px"></i><i style="background-size:100% 24px,100% 110px,100% 202px"></i><i style="background-size:100% 11px,100% 147px,100% 183px"></i><i style="background-size:100% 29px,100% 82px,100% 202px"></i><i style="background-size:100% 35px,100% 170px,100% 243px"></i><i style="background-size:100% 19px,100% 58px,100% 215px"></i><i style="background-size:100% 17px,100% 105px,100% 203px"></i><i style="background-size:100% 27px,100% 164px,100% 234px"></i><i style="background-size:100% 24px,100% 44px,100% 222px"></i><i style="background-size:100% 24px,100% 126px,100% 196px"></i><i style="background-size:100% 22px,100% 165px,100% 244px"></i><i style="background-size:100% 19px,100% 131px,100% 243px"></i><i style="background-size:100% 10px,100% 126px,100% 247px"></i><i style="background-size:100% 21px,100% 137px,100% 217px"></i><i style="background-size:100% 21px,100% 143px,100% 190px"></i><i style="background-size:100% 26px,100% 193px,100% 222px"></i><i style="background-size:100% 1px,100% 208px,100% 241px"></i><i style="background-size:100% 16px,100% 177px,100% 204px"></i><i style="background-size:100% 28px,100% 124px,100% 206px"></i><i style="background-size:100% 23px,100% 129px,100% 161px"></i><i style="background-size:100% 30px,100% 250px,100% 225px"></i><i style="background-size:100% 27px,100% 126px,100% 224px"></i><i style="background-size:100% 21px,100% 152px,100% 233px"></i><i style="background-size:100% 37px,100% 131px,100% 206px"></i><i style="background-size:100% 39px,100% 145px,100% 200px"></i><i style="background-size:100% 28px,100% 112px,100% 171px"></i><i style="background-size:100% 37px,100% 154px,100% 197px"></i><i style="background-size:100% 20px,100% 126px,100% 202px"></i><i style="background-size:100% 33px,100% 140px,100% 234px"></i><i style="background-size:100% 25px,100% 112px,100% 206px"></i><i style="background-size:100% 36px,100% 178px,100% 231px"></i><i style="background-size:100% 20px,100% 128px,100% 245px"></i><i style="background-size:100% 21px,100% 114px,100% 233px"></i><i style="background-size:100% 14px,100% 138px,100% 237px"></i><i style="background-size:100% 25px,100% 133px,100% 230px"></i><i style="background-size:100% 18px,100% 138px,100% 240px"></i><i style="background-size:100% 35px,100% 166px,100% 238px"></i><i style="background-size:100% 26px,100% 111px,100% 169px"></i><i style="background-size:100% 22px,100% 132px,100% 210px"></i><i style="background-size:100% 45px,100% 135px,100% 238px"></i><i style="background-size:100% 42px,100% 113px,100% 255px"></i><i style="background-size:100% 33px,100% 134px,100% 263px"></i><i style="background-size:100% 34px,100% 48px,100% 214px"></i><i style="background-size:100% 32px,100% 134px,100% 253px"></i><i style="background-size:100% 33px,100% 192px,100% 290px"></i><i style="background-size:100% 15px,100% 190px,100% 291px"></i><i style="background-size:100% 31px,100% 191px,100% 287px"></i><i style="background-size:100% 31px,100% 189px,100% 253px"></i><i style="background-size:100% 29px,100% 170px,100% 268px"></i><i style="background-size:100% 17px,100% 188px,100% 302px"></i><i style="background-size:100% 38px,100% 138px,100% 286px"></i><i style="background-size:100% 26px,100% 201px,100% 292px"></i><i style="background-size:100% 39px,100% 138px,100% 250px"></i><i style="background-size:100% 20px,100% 136px,100% 253px"></i><i style="background-size:100% 36px,100% 149px,100% 254px"></i><i style="background-size:100% 46px,100% 203px,100% 247px"></i><i style="background-size:100% 24px,100% 192px,100% 237px"></i><i style="background-size:100% 54px,100% 173px,100% 283px"></i><i style="background-size:100% 38px,100% 127px,100% 276px"></i><i style="background-size:100% 36px,100% 151px,100% 259px"></i><i style="background-size:100% 24px,100% 161px,100% 213px"></i><i style="background-size:100% 46px,100% 177px,100% 195px"></i><i style="background-size:100% 30px,100% 146px,100% 261px"></i><i style="background-size:100% 25px,100% 179px,100% 215px"></i><i style="background-size:100% 33px,100% 122px,100% 290px"></i><i style="background-size:100% 35px,100% 129px,100% 235px"></i><i style="background-size:100% 22px,100% 196px,100% 275px"></i><i style="background-size:100% 33px,100% 115px,100% 247px"></i><i style="background-size:100% 27px,100% 202px,100% 286px"></i><i style="background-size:100% 25px,100% 154px,100% 277px"></i><i style="background-size:100% 29px,100% 153px,100% 269px"></i><i style="background-size:100% 36px,100% 151px,100% 290px"></i><i style="background-size:100% 24px,100% 140px,100% 285px"></i><i style="background-size:100% 39px,100% 186px,100% 292px"></i><i style="background-size:100% 29px,100% 165px,100% 219px"></i><i style="background-size:100% 19px,100% 145px,100% 233px"></i><i style="background-size:100% 36px,100% 165px,100% 252px"></i><i style="background-size:100% 34px,100% 180px,100% 297px"></i><i style="background-size:100% 27px,100% 183px,100% 301px"></i><i style="background-size:100% 32px,100% 153px,100% 258px"></i><i style="background-size:100% 32px,100% 193px,100% 273px"></i><i style="background-size:100% 32px,100% 168px,100% 314px"></i><i style="background-size:100% 27px,100% 199px,100% 298px"></i><i style="background-size:100% 19px,100% 106px,100% 227px"></i><i style="background-size:100% 19px,100% 169px,100% 286px"></i><i style="background-size:100% 15px,100% 185px,100% 312px"></i><i style="background-size:100% 38px,100% 174px,100% 308px"></i><i style="background-size:100% 26px,100% 193px,100% 298px"></i><i style="background-size:100% 30px,100% 202px,100% 296px"></i><i style="background-size:100% 21px,100% 180px,100% 298px"></i><i style="background-size:100% 43px,100% 190px,100% 308px"></i><i style="background-size:100% 45px,100% 208px,100% 300px"></i><i style="background-size:100% 20px,100% 175px,100% 293px"></i><i style="background-size:100% 46px,100% 149px,100% 278px"></i><i style="background-size:100% 28px,100% 237px,100% 278px"></i><i style="background-size:100% 21px,100% 153px,100% 279px"></i><i style="background-size:100% 19px,100% 195px,100% 264px"></i><i style="background-size:100% 29px,100% 182px,100% 307px"></i><i style="background-size:100% 4px,100% 170px,100% 307px"></i><i style="background-size:100% 27px,100% 168px,100% 304px"></i><i style="background-size:100% 38px,100% 99px,100% 234px"></i><i style="background-size:100% 27px,100% 196px,100% 285px"></i><i style="background-size:100% 31px,100% 159px,100% 304px"></i><i style="background-size:100% 39px,100% 184px,100% 292px"></i><i style="background-size:100% 41px,100% 147px,100% 270px"></i><i style="background-size:100% 38px,100% 154px,100% 288px"></i><i style="background-size:100% 27px,100% 112px,100% 269px"></i><i style="background-size:100% 42px,100% 169px,100% 235px"></i><i style="background-size:100% 28px,100% 163px,100% 285px"></i><i style="background-size:100% 30px,100% 204px,100% 259px"></i><i style="background-size:100% 30px,100% 159px,100% 290px"></i><i style="background-size:100% 47px,100% 149px,100% 305px"></i><i style="background-size:100% 48px,100% 190px,100% 201px"></i><i style="background-size:100% 22px,100% 149px,100% 263px"></i><i style="background-size:100% 30px,100% 175px,100% 309px"></i><i style="background-size:100% 25px,100% 170px,100% 299px"></i><i style="background-size:100% 23px,100% 186px,100% 259px"></i><i style="background-size:100% 17px,100% 189px,100% 270px"></i><i style="background-size:100% 22px,100% 174px,100% 284px"></i><i style="background-size:100% 1px,100% 216px,100% 255px"></i><i style="background-size:100% 28px,100% 125px,100% 293px"></i><i style="background-size:100% 29px,100% 81px,100% 297px"></i><i style="background-size:100% 21px,100% 203px,100% 309px"></i><i style="background-size:100% 33px,100% 195px,100% 253px"></i><i style="background-size:100% 43px,100% 194px,100% 312px"></i><i style="background-size:100% 34px,100% 174px,100% 276px"></i><i style="background-size:100% 36px,100% 182px,100% 312px"></i><i style="background-size:100% 42px,100% 262px,100% 306px"></i><i style="background-size:100% 33px,100% 248px,100% 261px"></i><i style="background-size:100% 49px,100% 237px,100% 314px"></i><i style="background-size:100% 41px,100% 227px,100% 314px"></i><i style="background-size:100% 32px,100% 275px,100% 314px"></i><i style="background-size:100% 20px,100% 235px,100% 314px"></i><i style="background-size:100% 37px,100% 197px,100% 314px"></i><i style="background-size:100% 27px,100% 174px,100% 304px"></i><i style="background-size:100% 33px,100% 203px,100% 314px"></i><i style="background-size:100% 63px,100% 184px,100% 282px"></i><i style="background-size:100% 36px,100% 196px,100% 292px"></i><i style="background-size:100% 46px,100% 138px,100% 262px"></i><i style="background-size:100% 67px,100% 179px,100% 259px"></i><i style="background-size:100% 35px,100% 195px,100% 310px"></i><i style="background-size:100% 51px,100% 268px,100% 271px"></i><i style="background-size:100% 23px,100% 193px,100% 274px"></i><i style="background-size:100% 47px,100% 194px,100% 296px"></i><i style="background-size:100% 69px,100% 140px,100% 257px"></i><i style="background-size:100% 49px,100% 230px,100% 297px"></i><i style="background-size:100% 44px,100% 205px,100% 281px"></i><i style="background-size:100% 42px,100% 314px,100% 300px"></i><i style="background-size:100% 49px,100% 231px,100% 314px"></i><i style="background-size:100% 39px,100% 189px,100% 269px"></i><i style="background-size:100% 36px,100% 211px,100% 305px"></i><i style="background-size:100% 47px,100% 314px,100% 314px"></i><i style="background-size:100% 53px,100% 224px,100% 277px"></i><i style="background-size:100% 46px,100% 178px,100% 310px"></i><i style="background-size:100% 43px,100% 207px,100% 250px"></i><i style="background-size:100% 43px,100% 198px,100% 310px"></i><i style="background-size:100% 55px,100% 198px,100% 270px"></i><i style="background-size:100% 43px,100% 230px,100% 253px"></i><i style="background-size:100% 48px,100% 229px,100% 256px"></i><i style="background-size:100% 36px,100% 209px,100% 303px"></i><i style="background-size:100% 43px,100% 222px,100% 256px"></i><i style="background-size:100% 42px,100% 190px,100% 285px"></i><i style="background-size:100% 43px,100% 232px,100% 283px"></i><i style="background-size:100% 30px,100% 216px,100% 289px"></i><i style="background-size:100% 24px,100% 155px,100% 285px"></i><i style="background-size:100% 47px,100% 124px,100% 293px"></i><i style="background-size:100% 41px,100% 244px,100% 304px"></i><i style="background-size:100% 20px,100% 197px,100% 298px"></i><i style="background-size:100% 36px,100% 250px,100% 314px"></i><i style="background-size:100% 42px,100% 225px,100% 300px"></i><i style="background-size:100% 37px,100% 190px,100% 285px"></i><i style="background-size:100% 48px,100% 188px,100% 278px"></i><i style="background-size:100% 42px,100% 183px,100% 295px"></i><i style="background-size:100% 48px,100% 191px,100% 297px"></i><i style="background-size:100% 33px,100% 206px,100% 280px"></i><i style="background-size:100% 46px,100% 210px,100% 256px"></i><i style="background-size:100% 40px,100% 190px,100% 307px"></i><i style="background-size:100% 48px,100% 206px,100% 282px"></i><i style="background-size:100% 39px,100% 100px,100% 282px"></i><i style="background-size:100% 52px,100% 173px,100% 264px"></i><i style="background-size:100% 41px,100% 207px,100% 304px"></i><i style="background-size:100% 40px,100% 189px,100% 284px"></i><i style="background-size:100% 24px,100% 183px,100% 303px"></i><i style="background-size:100% 43px,100% 159px,100% 288px"></i><i style="background-size:100% 35px,100% 199px,100% 284px"></i><i style="background-size:100% 49px,100% 167px,100% 296px"></i><i style="background-size:100% 42px,100% 197px,100% 288px"></i><i style="background-size:100% 55px,100% 258px,100% 271px"></i><i style="background-size:100% 44px,100% 178px,100% 255px"></i><i style="background-size:100% 49px,100% 203px,100% 245px"></i><i style="background-size:100% 36px,100% 170px,100% 233px"></i><i style="background-size:100% 36px,100% 178px,100% 252px"></i><i style="background-size:100% 55px,100% 190px,100% 304px"></i><i style="background-size:100% 48px,100% 258px,100% 292px"></i><i style="background-size:100% 41px,100% 160px,100% 289px"></i><i style="background-size:100% 56px,100% 174px,100% 312px"></i><i style="background-size:100% 42px,100% 174px,100% 246px"></i><i style="background-size:100% 43px,100% 203px,100% 255px"></i><i style="background-size:100% 37px,100% 211px,100% 222px"></i><i style="background-size:100% 42px,100% 198px,100% 312px"></i><i style="background-size:100% 48px,100% 193px,100% 283px"></i><i style="background-size:100% 35px,100% 226px,100% 312px"></i><i style="background-size:100% 45px,100% 187px,100% 293px"></i><i style="background-size:100% 35px,100% 233px,100% 313px"></i><i style="background-size:100% 50px,100% 193px,100% 314px"></i><i style="background-size:100% 37px,100% 223px,100% 289px"></i><i style="background-size:100% 39px,100% 288px,100% 292px"></i><i style="background-size:100% 47px,100% 254px,100% 278px"></i><i style="background-size:100% 41px,100% 237px,100% 314px"></i><i style="background-size:100% 40px,100% 170px,100% 261px"></i><i style="background-size:100% 43px,100% 228px,100% 314px"></i><i style="background-size:100% 48px,100% 136px,100% 275px"></i><i style="background-size:100% 29px,100% 169px,100% 299px"></i><i style="background-size:100% 42px,100% 254px,100% 293px"></i><i style="background-size:100% 45px,100% 239px,100% 314px"></i><i style="background-size:100% 29px,100% 220px,100% 283px"></i><i style="background-size:100% 13px,100% 233px,100% 314px"></i><i style="background-size:100% 44px,100% 173px,100% 314px"></i><i style="background-size:100% 41px,100% 196px,100% 298px"></i><i style="background-size:100% 40px,100% 221px,100% 306px"></i><i style="background-size:100% 40px,100% 235px,100% 272px"></i><i style="background-size:100% 44px,100% 228px,100% 240px"></i><i style="background-size:100% 41px,100% 199px,100% 314px"></i><i style="background-size:100% 38px,100% 235px,100% 275px"></i><i style="background-size:100% 43px,100% 207px,100% 305px"></i><i style="background-size:100% 41px,100% 199px,100% 295px"></i><i style="background-size:100% 38px,100% 186px,100% 314px"></i><i style="background-size:100% 29px,100% 178px,100% 249px"></i><i style="background-size:100% 37px,100% 259px,100% 301px"></i><i style="background-size:100% 42px,100% 189px,100% 314px"></i><i style="background-size:100% 38px,100% 223px,100% 267px"></i><i style="background-size:100% 43px,100% 218px,100% 314px"></i><i style="background-size:100% 42px,100% 286px,100% 305px"></i><i style="background-size:100% 27px,100% 230px,100% 314px"></i><i style="background-size:100% 49px,100% 214px,100% 265px"></i><i style="background-size:100% 41px,100% 121px,100% 273px"></i><i style="background-size:100% 68px,100% 229px,100% 314px"></i><i style="background-size:100% 39px,100% 232px,100% 314px"></i><i style="background-size:100% 40px,100% 216px,100% 308px"></i><i style="background-size:100% 52px,100% 200px,100% 314px"></i><i style="background-size:100% 39px,100% 238px,100% 283px"></i><i style="background-size:100% 37px,100% 208px,100% 296px"></i><i style="background-size:100% 40px,100% 201px,100% 314px"></i><i style="background-size:100% 32px,100% 209px,100% 296px"></i><i style="background-size:100% 58px,100% 152px,100% 273px"></i><i style="background-size:100% 44px,100% 232px,100% 308px"></i><i style="background-size:100% 37px,100% 209px,100% 267px"></i><i style="background-size:100% 38px,100% 209px,100% 314px"></i><i style="background-size:100% 31px,100% 172px,100% 271px"></i><i style="background-size:100% 32px,100% 148px,100% 236px"></i><i style="background-size:100% 30px,100% 125px,100% 214px"></i><i style="background-size:100% 43px,100% 231px,100% 314px"></i><i style="background-size:100% 41px,100% 230px,100% 281px"></i><i style="background-size:100% 34px,100% 183px,100% 289px"></i><i style="background-size:100% 42px,100% 236px,100% 314px"></i><i style="background-size:100% 38px,100% 222px,100% 278px"></i><i style="background-size:100% 41px,100% 171px,100% 312px"></i><i style="background-size:100% 43px,100% 197px,100% 298px"></i><i style="background-size:100% 45px,100% 209px,100% 285px"></i><i style="background-size:100% 57px,100% 148px,100% 200px"></i><i style="background-size:100% 41px,100% 197px,100% 312px"></i><i style="background-size:100% 59px,100% 216px,100% 314px"></i><i style="background-size:100% 44px,100% 164px,100% 289px"></i><i style="background-size:100% 41px,100% 147px,100% 260px"></i><i style="background-size:100% 46px,100% 219px,100% 287px"></i><i style="background-size:100% 40px,100% 265px,100% 237px"></i><i style="background-size:100% 47px,100% 240px,100% 252px"></i><i style="background-size:100% 48px,100% 190px,100% 292px"></i><i style="background-size:100% 54px,100% 182px,100% 307px"></i><i style="background-size:100% 46px,100% 194px,100% 233px"></i><i style="background-size:100% 48px,100% 225px,100% 239px"></i><i style="background-size:100% 39px,100% 212px,100% 240px"></i><i style="background-size:100% 36px,100% 234px,100% 298px"></i><i style="background-size:100% 60px,100% 199px,100% 296px"></i><i style="background-size:100% 47px,100% 208px,100% 286px"></i><i style="background-size:100% 49px,100% 182px,100% 191px"></i><i style="background-size:100% 35px,100% 197px,100% 287px"></i><i style="background-size:100% 48px,100% 217px,100% 213px"></i><i style="background-size:100% 46px,100% 202px,100% 277px"></i><i style="background-size:100% 67px,100% 217px,100% 256px"></i><i style="background-size:100% 42px,100% 214px,100% 314px"></i><i style="background-size:100% 49px,100% 175px,100% 314px"></i><i style="background-size:100% 43px,100% 174px,100% 314px"></i><i style="background-size:100% 40px,100% 281px,100% 314px"></i><i style="background-size:100% 44px,100% 227px,100% 295px"></i><i style="background-size:100% 34px,100% 198px,100% 292px"></i><i style="background-size:100% 39px,100% 231px,100% 281px"></i><i style="background-size:100% 58px,100% 184px,100% 286px"></i><i style="background-size:100% 35px,100% 131px,100% 249px"></i><i style="background-size:100% 44px,100% 162px,100% 300px"></i><i style="background-size:100% 46px,100% 197px,100% 288px"></i><i style="background-size:100% 42px,100% 304px,100% 233px"></i><i style="background-size:100% 49px,100% 241px,100% 306px"></i><i style="background-size:100% 45px,100% 146px,100% 298px"></i><i style="background-size:100% 41px,100% 216px,100% 297px"></i><i style="background-size:100% 37px,100% 164px,100% 239px"></i><i style="background-size:100% 46px,100% 170px,100% 233px"></i><i style="background-size:100% 34px,100% 145px,100% 296px"></i><i style="background-size:100% 47px,100% 186px,100% 304px"></i><i style="background-size:100% 42px,100% 261px,100% 308px"></i><i style="background-size:100% 42px,100% 205px,100% 229px"></i><i style="background-size:100% 42px,100% 193px,100% 314px"></i><i style="background-size:100% 42px,100% 163px,100% 286px"></i><i style="background-size:100% 38px,100% 233px,100% 307px"></i><i style="background-size:100% 39px,100% 227px,100% 295px"></i><i style="background-size:100% 44px,100% 209px,100% 247px"></i><i style="background-size:100% 57px,100% 163px,100% 289px"></i><i style="background-size:100% 48px,100% 191px,100% 282px"></i><i style="background-size:100% 28px,100% 200px,100% 289px"></i><i style="background-size:100% 49px,100% 208px,100% 259px"></i><i style="background-size:100% 33px,100% 180px,100% 308px"></i><i style="background-size:100% 47px,100% 193px,100% 270px"></i><i style="background-size:100% 47px,100% 204px,100% 253px"></i><i style="background-size:100% 52px,100% 201px,100% 306px"></i><i style="background-size:100% 49px,100% 202px,100% 252px"></i><i style="background-size:100% 40px,100% 208px,100% 263px"></i><i style="background-size:100% 50px,100% 156px,100% 251px"></i><i style="background-size:100% 33px,100% 256px,100% 314px"></i><i style="background-size:100% 36px,100% 198px,100% 314px"></i><i style="background-size:100% 39px,100% 190px,100% 286px"></i><i style="background-size:100% 35px,100% 248px,100% 310px"></i><i style="background-size:100% 47px,100% 210px,100% 278px"></i><i style="background-size:100% 46px,100% 178px,100% 304px"></i><i style="background-size:100% 39px,100% 179px,100% 312px"></i><i style="background-size:100% 42px,100% 240px,100% 308px"></i><i style="background-size:100% 42px,100% 191px,100% 314px"></i><i style="background-size:100% 42px,100% 195px,100% 314px"></i><i style="background-size:100% 37px,100% 192px,100% 295px"></i><i style="background-size:100% 30px,100% 222px,100% 314px"></i><i style="background-size:100% 28px,100% 220px,100% 314px"></i><i style="background-size:100% 38px,100% 212px,100% 314px"></i><i style="background-size:100% 44px,100% 247px,100% 297px"></i><i style="background-size:100% 36px,100% 170px,100% 314px"></i><i style="background-size:100% 27px,100% 182px,100% 231px"></i><i style="background-size:100% 43px,100% 138px,100% 266px"></i><i style="background-size:100% 0px,100% 108px,100% 254px"></i><i style="background-size:100% 3px,100% 77px,100% 132px"></i><i style="background-size:100% 0px,100% 0px,100% 0px"></i><i style="background-size:100% 0px,100% 0px,100% 0px"></i><i style="background-size:100% 0px,100% 0px,100% 0px"></i><i style="background-size:100% 0px,100% 0px,100% 0px"></i></div><div class="a" style="left:319px;top:852px;width:1486px;height:12px;background:#50514c;border-top:1px solid #d8d8d8"></div><svg class="a" style="left:319px;top:853px;" width="20" height="11" viewBox="0 0 20 11"><path d="M0 0H2L12 11H0z" fill="#f4f4f4"/></svg><div class="a" style="left:314px;top:196px;width:4px;height:668px;background:#dfe5ee;border-left:1px solid #8c96a8"></div><div class="a" style="left:318px;top:220px;width:1px;height:632px;background:repeating-linear-gradient(#fff 0 2px,#333 2px 4px);"></div><div class="a" style="left:1805px;top:196px;width:1px;height:668px;background:#e6e8ee;"></div><div class="t" style="top:197.7px;font-size:11px;line-height:11px;color:#dfe3ea;left:1820px;">Hz</div><div class="t" style="top:237.3px;font-size:11.5px;line-height:11.5px;color:#d3d8e1;letter-spacing:-0.3px;left:1820px;">22000</div><div class="a" style="left:1806px;top:242px;width:9px;height:1px;background:#e6e8ee;"></div><div class="a" style="left:1806px;top:255px;width:5px;height:1px;background:#e6e8ee;"></div><div class="t" style="top:263.8px;font-size:11.5px;line-height:11.5px;color:#d3d8e1;letter-spacing:-0.3px;left:1820px;">20000</div><div class="a" style="left:1806px;top:268px;width:9px;height:1px;background:#e6e8ee;"></div><div class="a" style="left:1806px;top:282px;width:5px;height:1px;background:#e6e8ee;"></div><div class="t" style="top:290.3px;font-size:11.5px;line-height:11.5px;color:#d3d8e1;letter-spacing:-0.3px;left:1820px;">18000</div><div class="a" style="left:1806px;top:295px;width:9px;height:1px;background:#e6e8ee;"></div><div class="a" style="left:1806px;top:308px;width:5px;height:1px;background:#e6e8ee;"></div><div class="t" style="top:316.8px;font-size:11.5px;line-height:11.5px;color:#d3d8e1;letter-spacing:-0.3px;left:1820px;">16000</div><div class="a" style="left:1806px;top:322px;width:9px;height:1px;background:#e6e8ee;"></div><div class="a" style="left:1806px;top:334px;width:5px;height:1px;background:#e6e8ee;"></div><div class="t" style="top:343.3px;font-size:11.5px;line-height:11.5px;color:#d3d8e1;letter-spacing:-0.3px;left:1820px;">14000</div><div class="a" style="left:1806px;top:348px;width:9px;height:1px;background:#e6e8ee;"></div><div class="a" style="left:1806px;top:361px;width:5px;height:1px;background:#e6e8ee;"></div><div class="t" style="top:369.8px;font-size:11.5px;line-height:11.5px;color:#d3d8e1;letter-spacing:-0.3px;left:1820px;">12000</div><div class="a" style="left:1806px;top:374px;width:9px;height:1px;background:#e6e8ee;"></div><div class="a" style="left:1806px;top:388px;width:5px;height:1px;background:#e6e8ee;"></div><div class="t" style="top:396.3px;font-size:11.5px;line-height:11.5px;color:#d3d8e1;letter-spacing:-0.3px;left:1820px;">10000</div><div class="a" style="left:1806px;top:401px;width:9px;height:1px;background:#e6e8ee;"></div><div class="a" style="left:1806px;top:414px;width:5px;height:1px;background:#e6e8ee;"></div><div class="t" style="top:422.8px;font-size:11.5px;line-height:11.5px;color:#d3d8e1;letter-spacing:-0.3px;left:1820px;">8000</div><div class="a" style="left:1806px;top:428px;width:9px;height:1px;background:#e6e8ee;"></div><div class="a" style="left:1806px;top:440px;width:5px;height:1px;background:#e6e8ee;"></div><div class="t" style="top:449.3px;font-size:11.5px;line-height:11.5px;color:#d3d8e1;letter-spacing:-0.3px;left:1820px;">6000</div><div class="a" style="left:1806px;top:454px;width:9px;height:1px;background:#e6e8ee;"></div><div class="a" style="left:1806px;top:467px;width:5px;height:1px;background:#e6e8ee;"></div><div class="t" style="top:475.8px;font-size:11.5px;line-height:11.5px;color:#d3d8e1;letter-spacing:-0.3px;left:1820px;">4000</div><div class="a" style="left:1806px;top:480px;width:9px;height:1px;background:#e6e8ee;"></div><div class="a" style="left:1806px;top:494px;width:5px;height:1px;background:#e6e8ee;"></div><div class="t" style="top:502.3px;font-size:11.5px;line-height:11.5px;color:#d3d8e1;letter-spacing:-0.3px;left:1820px;">2000</div><div class="a" style="left:1806px;top:507px;width:9px;height:1px;background:#e6e8ee;"></div><div class="a" style="left:1806px;top:520px;width:5px;height:1px;background:#e6e8ee;"></div><div class="t" style="top:556.3px;font-size:11.5px;line-height:11.5px;color:#d3d8e1;letter-spacing:-0.3px;left:1820px;">22000</div><div class="a" style="left:1806px;top:561px;width:9px;height:1px;background:#e6e8ee;"></div><div class="a" style="left:1806px;top:574px;width:5px;height:1px;background:#e6e8ee;"></div><div class="t" style="top:582.8px;font-size:11.5px;line-height:11.5px;color:#d3d8e1;letter-spacing:-0.3px;left:1820px;">20000</div><div class="a" style="left:1806px;top:588px;width:9px;height:1px;background:#e6e8ee;"></div><div class="a" style="left:1806px;top:600px;width:5px;height:1px;background:#e6e8ee;"></div><div class="t" style="top:609.3px;font-size:11.5px;line-height:11.5px;color:#d3d8e1;letter-spacing:-0.3px;left:1820px;">18000</div><div class="a" style="left:1806px;top:614px;width:9px;height:1px;background:#e6e8ee;"></div><div class="a" style="left:1806px;top:627px;width:5px;height:1px;background:#e6e8ee;"></div><div class="t" style="top:635.8px;font-size:11.5px;line-height:11.5px;color:#d3d8e1;letter-spacing:-0.3px;left:1820px;">16000</div><div class="a" style="left:1806px;top:640px;width:9px;height:1px;background:#e6e8ee;"></div><div class="a" style="left:1806px;top:654px;width:5px;height:1px;background:#e6e8ee;"></div><div class="t" style="top:662.3px;font-size:11.5px;line-height:11.5px;color:#d3d8e1;letter-spacing:-0.3px;left:1820px;">14000</div><div class="a" style="left:1806px;top:667px;width:9px;height:1px;background:#e6e8ee;"></div><div class="a" style="left:1806px;top:680px;width:5px;height:1px;background:#e6e8ee;"></div><div class="t" style="top:688.8px;font-size:11.5px;line-height:11.5px;color:#d3d8e1;letter-spacing:-0.3px;left:1820px;">12000</div><div class="a" style="left:1806px;top:694px;width:9px;height:1px;background:#e6e8ee;"></div><div class="a" style="left:1806px;top:706px;width:5px;height:1px;background:#e6e8ee;"></div><div class="t" style="top:715.3px;font-size:11.5px;line-height:11.5px;color:#d3d8e1;letter-spacing:-0.3px;left:1820px;">10000</div><div class="a" style="left:1806px;top:720px;width:9px;height:1px;background:#e6e8ee;"></div><div class="a" style="left:1806px;top:733px;width:5px;height:1px;background:#e6e8ee;"></div><div class="t" style="top:741.8px;font-size:11.5px;line-height:11.5px;color:#d3d8e1;letter-spacing:-0.3px;left:1820px;">8000</div><div class="a" style="left:1806px;top:746px;width:9px;height:1px;background:#e6e8ee;"></div><div class="a" style="left:1806px;top:760px;width:5px;height:1px;background:#e6e8ee;"></div><div class="t" style="top:768.3px;font-size:11.5px;line-height:11.5px;color:#d3d8e1;letter-spacing:-0.3px;left:1820px;">6000</div><div class="a" style="left:1806px;top:773px;width:9px;height:1px;background:#e6e8ee;"></div><div class="a" style="left:1806px;top:786px;width:5px;height:1px;background:#e6e8ee;"></div><div class="t" style="top:794.8px;font-size:11.5px;line-height:11.5px;color:#d3d8e1;letter-spacing:-0.3px;left:1820px;">4000</div><div class="a" style="left:1806px;top:800px;width:9px;height:1px;background:#e6e8ee;"></div><div class="a" style="left:1806px;top:812px;width:5px;height:1px;background:#e6e8ee;"></div><div class="t" style="top:821.3px;font-size:11.5px;line-height:11.5px;color:#d3d8e1;letter-spacing:-0.3px;left:1820px;">2000</div><div class="a" style="left:1806px;top:826px;width:9px;height:1px;background:#e6e8ee;"></div><div class="a" style="left:1806px;top:839px;width:5px;height:1px;background:#e6e8ee;"></div><div class="a" style="left:1866px;top:218px;width:16px;height:648px;background:#000;border-left:2px solid #8f9aab;border-top:2px solid #a0aabb;border-right:2px solid #f2f2f6;border-bottom:2px solid #f2f2f6"></div><div class="a" style="left:1892px;top:218px;width:16px;height:648px;background:#000;border-left:2px solid #8f9aab;border-top:2px solid #a0aabb;border-right:2px solid #f2f2f6;border-bottom:2px solid #f2f2f6"></div><div class="a" style="left:314px;top:864px;width:1491px;height:33px;background:#6e7b94;"></div><div class="t" style="top:879.7px;font-size:11px;line-height:11px;color:#d9dde5;left:318px;">hms</div><div class="a" style="left:382px;top:865px;width:1px;height:8px;background:#e6e8ee;"></div><div class="t" style="top:879.3px;font-size:11.5px;line-height:11.5px;color:#dfe3ea;left:182px;width:400px;text-align:center;">0:20</div><div class="a" style="left:446px;top:865px;width:1px;height:8px;background:#e6e8ee;"></div><div class="t" style="top:879.3px;font-size:11.5px;line-height:11.5px;color:#dfe3ea;left:246px;width:400px;text-align:center;">0:40</div><div class="a" style="left:510px;top:865px;width:1px;height:8px;background:#e6e8ee;"></div><div class="t" style="top:879.3px;font-size:11.5px;line-height:11.5px;color:#dfe3ea;left:310px;width:400px;text-align:center;">1:00</div><div class="a" style="left:573px;top:865px;width:1px;height:8px;background:#e6e8ee;"></div><div class="t" style="top:879.3px;font-size:11.5px;line-height:11.5px;color:#dfe3ea;left:373px;width:400px;text-align:center;">1:20</div><div class="a" style="left:637px;top:865px;width:1px;height:8px;background:#e6e8ee;"></div><div class="t" style="top:879.3px;font-size:11.5px;line-height:11.5px;color:#dfe3ea;left:437px;width:400px;text-align:center;">1:40</div><div class="a" style="left:701px;top:865px;width:1px;height:8px;background:#e6e8ee;"></div><div class="t" style="top:879.3px;font-size:11.5px;line-height:11.5px;color:#dfe3ea;left:501px;width:400px;text-align:center;">2:00</div><div class="a" style="left:765px;top:865px;width:1px;height:8px;background:#e6e8ee;"></div><div class="t" style="top:879.3px;font-size:11.5px;line-height:11.5px;color:#dfe3ea;left:565px;width:400px;text-align:center;">2:20</div><div class="a" style="left:828px;top:865px;width:1px;height:8px;background:#e6e8ee;"></div><div class="t" style="top:879.3px;font-size:11.5px;line-height:11.5px;color:#dfe3ea;left:628px;width:400px;text-align:center;">2:40</div><div class="a" style="left:892px;top:865px;width:1px;height:8px;background:#e6e8ee;"></div><div class="t" style="top:879.3px;font-size:11.5px;line-height:11.5px;color:#dfe3ea;left:692px;width:400px;text-align:center;">3:00</div><div class="a" style="left:956px;top:865px;width:1px;height:8px;background:#e6e8ee;"></div><div class="t" style="top:879.3px;font-size:11.5px;line-height:11.5px;color:#dfe3ea;left:756px;width:400px;text-align:center;">3:20</div><div class="a" style="left:1020px;top:865px;width:1px;height:8px;background:#e6e8ee;"></div><div class="t" style="top:879.3px;font-size:11.5px;line-height:11.5px;color:#dfe3ea;left:820px;width:400px;text-align:center;">3:40</div><div class="a" style="left:1083px;top:865px;width:1px;height:8px;background:#e6e8ee;"></div><div class="t" style="top:879.3px;font-size:11.5px;line-height:11.5px;color:#dfe3ea;left:883px;width:400px;text-align:center;">4:00</div><div class="a" style="left:1147px;top:865px;width:1px;height:8px;background:#e6e8ee;"></div><div class="t" style="top:879.3px;font-size:11.5px;line-height:11.5px;color:#dfe3ea;left:947px;width:400px;text-align:center;">4:20</div><div class="a" style="left:1211px;top:865px;width:1px;height:8px;background:#e6e8ee;"></div><div class="t" style="top:879.3px;font-size:11.5px;line-height:11.5px;color:#dfe3ea;left:1011px;width:400px;text-align:center;">4:40</div><div class="a" style="left:1275px;top:865px;width:1px;height:8px;background:#e6e8ee;"></div><div class="t" style="top:879.3px;font-size:11.5px;line-height:11.5px;color:#dfe3ea;left:1075px;width:400px;text-align:center;">5:00</div><div class="a" style="left:1339px;top:865px;width:1px;height:8px;background:#e6e8ee;"></div><div class="t" style="top:879.3px;font-size:11.5px;line-height:11.5px;color:#dfe3ea;left:1139px;width:400px;text-align:center;">5:20</div><div class="a" style="left:1402px;top:865px;width:1px;height:8px;background:#e6e8ee;"></div><div class="t" style="top:879.3px;font-size:11.5px;line-height:11.5px;color:#dfe3ea;left:1202px;width:400px;text-align:center;">5:40</div><div class="a" style="left:1466px;top:865px;width:1px;height:8px;background:#e6e8ee;"></div><div class="t" style="top:879.3px;font-size:11.5px;line-height:11.5px;color:#dfe3ea;left:1266px;width:400px;text-align:center;">6:00</div><div class="a" style="left:1530px;top:865px;width:1px;height:8px;background:#e6e8ee;"></div><div class="t" style="top:879.3px;font-size:11.5px;line-height:11.5px;color:#dfe3ea;left:1330px;width:400px;text-align:center;">6:20</div><div class="a" style="left:1594px;top:865px;width:1px;height:8px;background:#e6e8ee;"></div><div class="t" style="top:879.3px;font-size:11.5px;line-height:11.5px;color:#dfe3ea;left:1394px;width:400px;text-align:center;">6:40</div><div class="a" style="left:1657px;top:865px;width:1px;height:8px;background:#e6e8ee;"></div><div class="t" style="top:879.3px;font-size:11.5px;line-height:11.5px;color:#dfe3ea;left:1457px;width:400px;text-align:center;">7:00</div><div class="a" style="left:1721px;top:865px;width:1px;height:8px;background:#e6e8ee;"></div><div class="t" style="top:879.3px;font-size:11.5px;line-height:11.5px;color:#dfe3ea;left:1521px;width:400px;text-align:center;">7:20</div><div class="a" style="left:1785px;top:865px;width:1px;height:8px;background:#e6e8ee;"></div><div class="t" style="top:879.3px;font-size:11.5px;line-height:11.5px;color:#dfe3ea;left:1585px;width:400px;text-align:center;">7:40</div><div class="a" style="left:350px;top:865px;width:1px;height:3px;background:#e6e8ee;"></div><div class="a" style="left:414px;top:865px;width:1px;height:3px;background:#e6e8ee;"></div><div class="a" style="left:478px;top:865px;width:1px;height:3px;background:#e6e8ee;"></div><div class="a" style="left:541px;top:865px;width:1px;height:3px;background:#e6e8ee;"></div><div class="a" style="left:605px;top:865px;width:1px;height:3px;background:#e6e8ee;"></div><div class="a" style="left:669px;top:865px;width:1px;height:3px;background:#e6e8ee;"></div><div class="a" style="left:733px;top:865px;width:1px;height:3px;background:#e6e8ee;"></div><div class="a" style="left:796px;top:865px;width:1px;height:3px;background:#e6e8ee;"></div><div class="a" style="left:860px;top:865px;width:1px;height:3px;background:#e6e8ee;"></div><div class="a" style="left:924px;top:865px;width:1px;height:3px;background:#e6e8ee;"></div><div class="a" style="left:988px;top:865px;width:1px;height:3px;background:#e6e8ee;"></div><div class="a" style="left:1052px;top:865px;width:1px;height:3px;background:#e6e8ee;"></div><div class="a" style="left:1115px;top:865px;width:1px;height:3px;background:#e6e8ee;"></div><div class="a" style="left:1179px;top:865px;width:1px;height:3px;background:#e6e8ee;"></div><div class="a" style="left:1243px;top:865px;width:1px;height:3px;background:#e6e8ee;"></div><div class="a" style="left:1307px;top:865px;width:1px;height:3px;background:#e6e8ee;"></div><div class="a" style="left:1370px;top:865px;width:1px;height:3px;background:#e6e8ee;"></div><div class="a" style="left:1434px;top:865px;width:1px;height:3px;background:#e6e8ee;"></div><div class="a" style="left:1498px;top:865px;width:1px;height:3px;background:#e6e8ee;"></div><div class="a" style="left:1562px;top:865px;width:1px;height:3px;background:#e6e8ee;"></div><div class="a" style="left:1626px;top:865px;width:1px;height:3px;background:#e6e8ee;"></div><div class="a" style="left:1689px;top:865px;width:1px;height:3px;background:#e6e8ee;"></div><div class="a" style="left:1753px;top:865px;width:1px;height:3px;background:#e6e8ee;"></div><div class="a" style="left:318px;top:865px;width:1px;height:8px;background:#e6e8ee;"></div><div class="a" style="left:314px;top:897px;width:1606px;height:100px;background:#e9edf2;"></div><div class="a" style="left:652px;top:901px;width:1px;height:96px;background:#aab2be;"></div><div class="a" style="left:1553px;top:901px;width:1px;height:96px;background:#aab2be;"></div><div class="a" style="left:322px;top:914px;width:175px;height:69px;background:#dde3ec;border:1px solid #c5ccd7"></div><div class="a" style="left:505px;top:914px;width:140px;height:69px;background:#dde3ec;border:1px solid #c5ccd7"></div><div class="a" style="left:357px;top:914px;width:1px;height:69px;background:#c8cfda;"></div><div class="a" style="left:392px;top:914px;width:1px;height:69px;background:#c8cfda;"></div><div class="a" style="left:427px;top:914px;width:1px;height:69px;background:#c8cfda;"></div><div class="a" style="left:462px;top:914px;width:1px;height:69px;background:#c8cfda;"></div><div class="a" style="left:540px;top:914px;width:1px;height:69px;background:#c8cfda;"></div><div class="a" style="left:575px;top:914px;width:1px;height:69px;background:#c8cfda;"></div><div class="a" style="left:610px;top:914px;width:1px;height:69px;background:#c8cfda;"></div><div class="a" style="left:322px;top:948px;width:175px;height:1px;background:#c8cfda;"></div><div class="a" style="left:505px;top:948px;width:140px;height:1px;background:#c8cfda;"></div><svg class="a" style="left:322px;top:914px;" width="35" height="34" viewBox="0 0 35 34"><path d="M11 10L24 17L11 24z" fill="#3a404c"/></svg><svg class="a" style="left:357px;top:914px;" width="35" height="34" viewBox="0 0 35 34"><path d="M9 13V22H25V13H20" fill="none" stroke="#3a404c" stroke-width="2.2"/><path d="M14 13H19" stroke="#3a404c" stroke-width="2.2"/><path d="M17 9L21 13L17 17z" fill="#3a404c"/></svg><svg class="a" style="left:392px;top:914px;" width="35" height="34" viewBox="0 0 35 34"><path d="M9 11L18 17L9 23z" fill="#3a404c"/><rect x="19" y="11" width="3" height="12" fill="#3a404c"/></svg><svg class="a" style="left:427px;top:914px;" width="35" height="34" viewBox="0 0 35 34"><path d="M17 11L10 17L17 23zM24 11L17 17L24 23z" fill="#3a404c"/></svg><svg class="a" style="left:462px;top:914px;" width="35" height="34" viewBox="0 0 35 34"><path d="M11 11L18 17L11 23zM18 11L25 17L18 23z" fill="#3a404c"/></svg><svg class="a" style="left:322px;top:948px;" width="35" height="34" viewBox="0 0 35 34"><rect x="11" y="11" width="12" height="12" fill="#3a404c"/></svg><svg class="a" style="left:357px;top:948px;" width="35" height="34" viewBox="0 0 35 34"><rect x="10" y="11" width="4" height="12" fill="#3a404c"/><rect x="19" y="11" width="4" height="12" fill="#3a404c"/></svg><svg class="a" style="left:392px;top:948px;" width="35" height="34" viewBox="0 0 35 34"><circle cx="17" cy="17.5" r="6" fill="#e8341c"/></svg><svg class="a" style="left:427px;top:948px;" width="35" height="34" viewBox="0 0 35 34"><rect x="9" y="10" width="2.5" height="14" fill="#3a404c"/><path d="M19 11L12 17L19 23zM26 11L19 17L26 23z" fill="#3a404c"/></svg><svg class="a" style="left:462px;top:948px;" width="35" height="34" viewBox="0 0 35 34"><path d="M9 11L16 17L9 23zM16 11L23 17L16 23z" fill="#3a404c"/><rect x="23.5" y="10" width="2.5" height="14" fill="#3a404c"/></svg><svg class="a" style="left:505px;top:914px;" width="35" height="34" viewBox="0 0 35 34"><circle cx="15" cy="15" r="7" fill="none" stroke="#3a404c" stroke-width="2.2"/><path d="M20 20L25 25" stroke="#3a404c" stroke-width="3" stroke-linecap="round"/><path d="M11 15H19M15 11V19" stroke="#3a404c" stroke-width="1.8"/></svg><svg class="a" style="left:540px;top:914px;" width="35" height="34" viewBox="0 0 35 34"><circle cx="15" cy="15" r="7" fill="none" stroke="#3a404c" stroke-width="2.2"/><path d="M20 20L25 25" stroke="#3a404c" stroke-width="3" stroke-linecap="round"/><path d="M11 15H19" stroke="#3a404c" stroke-width="1.8"/></svg><svg class="a" style="left:575px;top:914px;" width="35" height="34" viewBox="0 0 35 34"><circle cx="15" cy="15" r="7" fill="none" stroke="#3a404c" stroke-width="2.2"/><path d="M20 20L25 25" stroke="#3a404c" stroke-width="3" stroke-linecap="round"/><path d="M11 27h9" stroke="#3a404c" stroke-width="2" stroke-dasharray="2 1"/></svg><svg class="a" style="left:610px;top:914px;" width="35" height="34" viewBox="0 0 35 34"><circle cx="18" cy="15" r="7" fill="none" stroke="#3a404c" stroke-width="2.2"/><path d="M23 20L28 25" stroke="#3a404c" stroke-width="3" stroke-linecap="round"/><path d="M7 9V21M4 12L7 8L10 12M4 18L7 22L10 18" fill="none" stroke="#3a404c" stroke-width="1.6"/></svg><svg class="a" style="left:505px;top:948px;" width="35" height="34" viewBox="0 0 35 34"><path d="M8 9H5V25H8" fill="none" stroke="#3a404c" stroke-width="2"/><circle cx="17" cy="16" r="7" fill="none" stroke="#3a404c" stroke-width="2.2"/><path d="M22 21L27 26" stroke="#3a404c" stroke-width="3" stroke-linecap="round"/></svg><svg class="a" style="left:540px;top:948px;" width="35" height="34" viewBox="0 0 35 34"><circle cx="15" cy="15" r="7" fill="none" stroke="#3a404c" stroke-width="2.2"/><path d="M20 20L25 25" stroke="#3a404c" stroke-width="3" stroke-linecap="round"/><rect x="12" y="12" width="6" height="6" fill="none" stroke="#3a404c" stroke-width="1.4"/></svg><svg class="a" style="left:575px;top:948px;" width="35" height="34" viewBox="0 0 35 34"><circle cx="14" cy="16" r="7" fill="none" stroke="#3a404c" stroke-width="2.2"/><path d="M19 21L24 26" stroke="#3a404c" stroke-width="3" stroke-linecap="round"/><path d="M26 9H29V25H26" fill="none" stroke="#3a404c" stroke-width="2"/></svg><svg class="a" style="left:610px;top:948px;" width="35" height="34" viewBox="0 0 35 34"><circle cx="18" cy="16" r="7" fill="none" stroke="#3a404c" stroke-width="2.2"/><path d="M23 21L28 26" stroke="#3a404c" stroke-width="3" stroke-linecap="round"/><path d="M4 8L7 12L10 8M4 24L7 20L10 24M7 12V20" fill="none" stroke="#3a404c" stroke-width="1.6"/></svg><div class="t" style="top:904.6px;font-size:95px;line-height:95px;color:#000;letter-spacing:4.4px;left:833px;transform:scaleX(0.9);transform-origin:0 0;-webkit-text-stroke:1.2px #000">00:00:00.000</div><div class="t" style="top:911.0px;font-size:13px;line-height:13px;color:#222;left:1633px;">Start</div><div class="t" style="top:911.0px;font-size:13px;line-height:13px;color:#222;left:1724px;">End</div><div class="t" style="top:912.0px;font-size:13px;line-height:13px;color:#222;left:1819px;">Length</div><div class="t" style="top:933.0px;font-size:13px;line-height:13px;color:#222;left:1219px;width:400px;text-align:right;">Selection</div><div class="t" style="top:963.0px;font-size:13px;line-height:13px;color:#222;left:1219px;width:400px;text-align:right;">View</div><div class="a" style="left:1633px;top:929px;width:89px;height:24px;background:#fff;border:1px solid #e3e7ed"></div><div class="t" style="top:935.0px;font-size:13px;line-height:13px;color:#111;letter-spacing:0.3px;left:1637px;">00:00:00.000</div><div class="a" style="left:1726px;top:929px;width:89px;height:24px;background:#fff;border:1px solid #e3e7ed"></div><div class="t" style="top:935.0px;font-size:13px;line-height:13px;color:#111;letter-spacing:0.3px;left:1730px;">00:00:00.000</div><div class="a" style="left:1819px;top:929px;width:89px;height:24px;background:#fff;border:1px solid #e3e7ed"></div><div class="t" style="top:935.0px;font-size:13px;line-height:13px;color:#111;letter-spacing:0.3px;left:1823px;">00:00:00.000</div><div class="a" style="left:1633px;top:958px;width:89px;height:24px;background:#fff;border:1px solid #e3e7ed"></div><div class="t" style="top:964.0px;font-size:13px;line-height:13px;color:#111;letter-spacing:0.3px;left:1637px;">00:00:00.000</div><div class="a" style="left:1726px;top:958px;width:89px;height:24px;background:#fff;border:1px solid #e3e7ed"></div><div class="t" style="top:964.0px;font-size:13px;line-height:13px;color:#111;letter-spacing:0.3px;left:1730px;">00:07:45.910</div><div class="a" style="left:1819px;top:958px;width:89px;height:24px;background:#fff;border:1px solid #e3e7ed"></div><div class="t" style="top:964.0px;font-size:13px;line-height:13px;color:#111;letter-spacing:0.3px;left:1823px;">00:07:45.910</div><div class="a" style="left:0px;top:997px;width:1920px;height:30px;background:#eef1f5;border-top:1px solid #d5dae2"></div><div class="a" style="left:1284px;top:1005px;width:1px;height:20px;background:#c9cfd8;"></div><div class="a" style="left:1680px;top:1005px;width:1px;height:20px;background:#c9cfd8;"></div><div class="a" style="left:1801px;top:1005px;width:1px;height:20px;background:#c9cfd8;"></div><div class="a" style="left:1916px;top:1005px;width:1px;height:20px;background:#c9cfd8;"></div><div class="t" style="top:1008.0px;font-size:13px;line-height:13px;color:#222;left:1293px;">44100 Hz, 16-bit, 2 Channels</div><div class="t" style="top:1008.0px;font-size:13px;line-height:13px;color:#222;left:1688px;">78,379 Mb</div><div class="t" style="top:1008.0px;font-size:13px;line-height:13px;color:#222;letter-spacing:0.3px;left:1808px;">00:07:45.910</div><div class="a" style="left:0px;top:1027px;width:1920px;height:53px;background:#fff;"></div><svg class="a" style="left:62px;top:1039px;" width="14" height="16" viewBox="0 0 14 16"><path d="M1 2h5l1 2h6v11H1z" fill="#f2c94c"/><path d="M1 5h12v10H1z" fill="#f8d775"/></svg><div class="t" style="top:1040.3px;font-size:15px;line-height:15px;color:#111;letter-spacing:-0.15px;left:85px;">Malwarebytes Anti-Malware Premium v2.2.1.1043 Portable by Foxx Portabl</div><svg class="a" style="left:62px;top:1068px;" width="14" height="12" viewBox="0 0 14 12"><path d="M1 2h5l1 2h6v11H1z" fill="#f2c94c"/></svg><div class="t" style="top:1068.3px;font-size:15px;line-height:15px;color:#111;left:85px;">Melita</div><div class="a" style="left:574px;top:1031px;width:19px;height:49px;background:#f0f0f0;"></div><svg class="a" style="left:577px;top:1062px;" width="12" height="8" viewBox="0 0 12 8"><path d="M1 1L6 6L11 1" fill="none" stroke="#333" stroke-width="1.3"/></svg><div class="a" style="left:0px;top:1078px;width:1920px;height:2px;background:#3a3a3a;"></div></body></html>
